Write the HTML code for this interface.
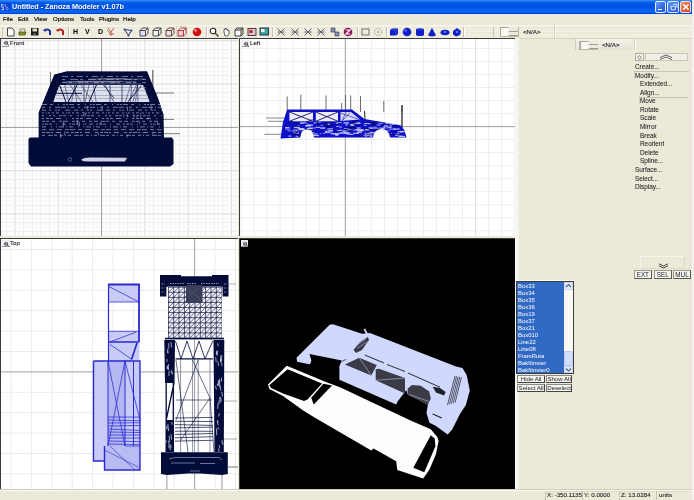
<!DOCTYPE html>
<html><head><meta charset="utf-8">
<style>
*{margin:0;padding:0;box-sizing:border-box}
body{width:694px;height:500px;overflow:hidden;background:#ece9d8;position:relative;font-family:"Liberation Sans",sans-serif;color:#000}
.a{position:absolute}
.t{position:absolute;white-space:nowrap;line-height:1;will-change:transform}
#menu .t{font-size:6.1px;top:16px;color:#111;-webkit-text-stroke:0.2px #111}
.panel .t{font-size:6.4px;color:#1a1a1a;-webkit-text-stroke:0.05px #1a1a1a}
.lst .t{font-size:5.9px;color:#fff;left:518px}
.sb .t{font-size:6.2px;color:#222;top:492.4px;-webkit-text-stroke:0.1px #222}
.bt{position:absolute;background:#f5f4ee;border:1px solid #6f6f66;font-size:6px;color:#222;text-align:center;line-height:7px;white-space:nowrap;will-change:transform}
</style></head><body>
<div class="a" style="left:692px;top:0;width:2px;height:500px;background:#f2f2ee"></div>
<div class="a" style="left:688.5px;top:38px;width:1px;height:451px;background:#e4e1d0"></div>
<!-- Title bar -->
<div class="a" style="left:0;top:0;width:692px;height:14px;background:linear-gradient(#3a94fa 0,#1a74f2 9%,#0058e6 22%,#0054e4 58%,#0864f4 76%,#0862f2 88%,#003ec4 100%)"></div>
<svg class="a" style="left:0;top:2px" width="11" height="10" viewBox="0 0 11 10">
  <rect x="0.5" y="1" width="10" height="8" fill="#0a3cc8" opacity="0.7"/>
  <path d="M3.6 2.6H1.6V5H3.4V7.6H1.4" stroke="#b8b8ff" stroke-width="1.1" fill="none"/>
  <path d="M5.2 2.4L5.8 4.6" stroke="#a8a8ff" stroke-width="1.2"/>
  <ellipse cx="7.2" cy="6.6" rx="1" ry="1.3" fill="none" stroke="#90a0ff" stroke-width="1"/>
</svg>
<div class="t" style="left:11.8px;top:3.2px;font-size:7.3px;font-weight:bold;color:#fff;letter-spacing:-0.05px;text-shadow:0.5px 0.5px 0.5px #0030a0">Untitled - Zanoza Modeler v1.07b</div>
<div class="a" style="left:654.5px;top:1.2px;width:11.5px;height:11.5px;border:1px solid #e8eefc;border-radius:2px;background:linear-gradient(135deg,#6a9cf8,#3268e4 60%,#2a58d0)"><div class="a" style="left:2.5px;top:6.5px;width:4px;height:1.6px;background:#fff"></div></div>
<div class="a" style="left:667px;top:1.2px;width:11.5px;height:11.5px;border:1px solid #e8eefc;border-radius:2px;background:linear-gradient(135deg,#6a9cf8,#3268e4 60%,#2a58d0)"><svg class="a" style="left:1.5px;top:1.2px" width="8" height="8"><path d="M3 1.2h4v3.6M1.2 3.2h4.2v3.6H1.2z" fill="none" stroke="#e8eefc" stroke-width="1"/></svg></div>
<div class="a" style="left:679.5px;top:1.2px;width:11.5px;height:11.5px;border:1px solid #f4e0d8;border-radius:2px;background:linear-gradient(135deg,#f59a70,#e0582c 60%,#c84420)">
  <svg class="a" style="left:1.2px;top:1.2px" width="8" height="8"><path d="M1.2 1.2L6.6 6.6M6.6 1.2L1.2 6.6" stroke="#fff" stroke-width="1.5"/></svg></div>
<!-- Menu -->
<div id="menu">
  <div class="t" style="left:3px">File</div>
  <div class="t" style="left:17.6px">Edit</div>
  <div class="t" style="left:34.3px">View</div>
  <div class="t" style="left:52.8px">Options</div>
  <div class="t" style="left:79.5px">Tools</div>
  <div class="t" style="left:99px">Plugins</div>
  <div class="t" style="left:123.4px">Help</div>
</div>
<!-- Toolbar -->
<div class="a" style="left:0;top:14px;width:692px;height:1px;background:#dfe6f6"></div>
<div class="a" style="left:0;top:25px;width:692px;height:13px;background:repeating-linear-gradient(#ece9d8 0,#ece9d8 1.4px,#f3f1e6 1.4px,#f3f1e6 2.4px)"></div>
<div class="a" style="left:0;top:25px;width:692px;height:0.8px;background:#f6f5ee"></div>
<div class="a" style="left:553.5px;top:25px;width:1px;height:13px;background:#d4d0bc"></div><div class="a" style="left:554.5px;top:25px;width:1px;height:13px;background:#faf9f4"></div>
<div class="a" style="left:2px;top:26.5px;width:1px;height:10px;background:#c8c5b2"></div>
<div class="a" style="left:67.5px;top:26.5px;width:1px;height:10px;background:#c5c2b0"></div><div class="a" style="left:68.5px;top:26.5px;width:1px;height:10px;background:#fff"></div>
<div class="a" style="left:206px;top:26.5px;width:1px;height:10px;background:#c5c2b0"></div><div class="a" style="left:207px;top:26.5px;width:1px;height:10px;background:#fff"></div>
<div class="a" style="left:272px;top:26.5px;width:1px;height:10px;background:#c5c2b0"></div><div class="a" style="left:273px;top:26.5px;width:1px;height:10px;background:#fff"></div>
<div class="a" style="left:357px;top:26.5px;width:1px;height:10px;background:#c5c2b0"></div><div class="a" style="left:358px;top:26.5px;width:1px;height:10px;background:#fff"></div>
<div class="a" style="left:385.5px;top:26.5px;width:1px;height:10px;background:#c5c2b0"></div><div class="a" style="left:386.5px;top:26.5px;width:1px;height:10px;background:#fff"></div>
<div class="a" style="left:462.5px;top:26.5px;width:1px;height:10px;background:#c5c2b0"></div><div class="a" style="left:463.5px;top:26.5px;width:1px;height:10px;background:#fff"></div>
<div class="a" style="left:492.5px;top:26.5px;width:1px;height:10px;background:#c5c2b0"></div>
<div class="a" style="left:499.5px;top:26.5px;width:19px;height:10px;background:#f4f3ec;border:1px solid #b8b6a8"></div>
<div class="a" style="left:500px;top:27px;width:7px;height:9px;border-left:1.2px solid #a8a698;border-top:1px solid #a8a698;background:#fafaf5"></div>
<div class="a" style="left:509px;top:27px;width:9px;height:4.5px;background:#eceade;border-bottom:1px solid #a09e90"></div>
<div class="a" style="left:509px;top:31.5px;width:9px;height:4.5px;background:#eceade;border-bottom:1px solid #a09e90"></div>
<div class="t" style="left:522.5px;top:29.2px;font-size:6.2px;color:#222;-webkit-text-stroke:0.12px #222">&lt;N/A&gt;</div>
<svg class="a" style="left:6px;top:26.8px" width="11" height="10" viewBox="0 0 11 10"><path d="M1.5 1h4.5l2 2v6h-6.5z" fill="#fff" stroke="#333" stroke-width="0.9"/></svg>
<svg class="a" style="left:18px;top:26.8px" width="11" height="10" viewBox="0 0 11 10"><path d="M1 5h7l-1 3H1z" fill="#8a9a20" stroke="#3a4010" stroke-width="0.7"/><path d="M2 2h5v3H2z" fill="#e8e0b0" stroke="#555" stroke-width="0.6"/></svg>
<svg class="a" style="left:30px;top:26.8px" width="11" height="10" viewBox="0 0 11 10"><rect x="1" y="1" width="7.5" height="7.5" fill="#1a1a1a"/><rect x="2.5" y="1.5" width="4.5" height="3" fill="#dfe0c8"/><rect x="3" y="6" width="3" height="2" fill="#555"/></svg>
<svg class="a" style="left:42px;top:26.8px" width="11" height="10" viewBox="0 0 11 10"><path d="M2 4a3.5 3 0 0 1 6 0v4" stroke="#2030a0" stroke-width="2" fill="none"/><path d="M1 3l2-1 1 3z" fill="#3040b0"/></svg>
<svg class="a" style="left:55px;top:26.8px" width="11" height="10" viewBox="0 0 11 10"><path d="M2 4a3.5 3 0 0 1 6 0v4" stroke="#b02020" stroke-width="2" fill="none"/><path d="M1 3l2-1 1 3z" fill="#c03030"/></svg>
<div class="t" style="left:73px;top:28.2px;font-size:7px;font-weight:bold;color:#000">H</div>
<div class="t" style="left:85px;top:28.2px;font-size:7px;font-weight:bold;color:#000">V</div>
<div class="t" style="left:97.5px;top:28.2px;font-size:7px;font-weight:bold;color:#000">D</div>
<svg class="a" style="left:106px;top:26.8px" width="11" height="10" viewBox="0 0 11 10"><path d="M2 1l3 4 3-4M5 5v4M3 7h5" stroke="#c04040" stroke-width="0.9" fill="none"/><path d="M1 3l3 3" stroke="#40a040" stroke-width="0.9"/></svg>
<svg class="a" style="left:123px;top:26.8px" width="11" height="10" viewBox="0 0 11 10"><path d="M1.5 2.5l7 1-3 5z" stroke="#223" stroke-width="0.9" fill="none"/><circle cx="1.5" cy="2.5" r="1" fill="#2040c0"/><circle cx="8.5" cy="3.5" r="1" fill="#2040c0"/><circle cx="5.5" cy="8.5" r="1" fill="#2040c0"/></svg>
<svg class="a" style="left:139px;top:26.8px" width="11" height="10" viewBox="0 0 11 10"><path d="M1 3.5h5.5v5.5H1z" fill="#dfe2f8" stroke="#334" stroke-width="0.9"/><path d="M1 3.5l2.5-2.5h5.5v5.5l-2.5 2.5M6.5 3.5l2.5-2.5" fill="none" stroke="#334" stroke-width="0.9"/></svg>
<svg class="a" style="left:152px;top:26.8px" width="11" height="10" viewBox="0 0 11 10"><path d="M1 3.5h5.5v5.5H1z" fill="#f4f4f4" stroke="#333" stroke-width="0.9"/><path d="M1 3.5l2.5-2.5h5.5v5.5l-2.5 2.5M6.5 3.5l2.5-2.5" fill="none" stroke="#333" stroke-width="0.9"/></svg>
<svg class="a" style="left:165px;top:26.8px" width="11" height="10" viewBox="0 0 11 10"><path d="M1 3.5h5.5v5.5H1z" fill="#f0dce4" stroke="#533" stroke-width="0.9"/><path d="M1 3.5l2.5-2.5h5.5v5.5l-2.5 2.5M6.5 3.5l2.5-2.5" fill="none" stroke="#533" stroke-width="0.9"/></svg>
<div class="a" style="left:176px;top:26px;width:11px;height:11px;background:#fbfbf8;border:1px solid #d8d6c8"></div>
<svg class="a" style="left:177px;top:26.8px" width="11" height="10" viewBox="0 0 11 10"><path d="M1 3.5h5.5v5.5H1z" fill="#f6d0d0" stroke="#a02020" stroke-width="0.9"/><path d="M1 3.5l2.5-2.5h5.5v5.5l-2.5 2.5M6.5 3.5l2.5-2.5" fill="none" stroke="#a02020" stroke-width="0.9"/></svg>
<svg class="a" style="left:191.5px;top:26.8px" width="11" height="10" viewBox="0 0 11 10"><circle cx="5" cy="5" r="4.3" fill="#d01010"/><circle cx="3.6" cy="3.4" r="1.3" fill="#ff9090"/></svg>
<svg class="a" style="left:209px;top:26.8px" width="11" height="10" viewBox="0 0 11 10"><circle cx="4" cy="4" r="2.8" fill="#fff" stroke="#222" stroke-width="1.1"/><path d="M6 6l3.5 3.5" stroke="#5a5030" stroke-width="1.6"/></svg>
<svg class="a" style="left:222px;top:26.8px" width="11" height="10" viewBox="0 0 11 10"><path d="M2 5v-2.5h1v-1h1.5v1h1v1h1.5v3.5l-1.5 2H3z" fill="#fff" stroke="#333" stroke-width="0.8"/></svg>
<svg class="a" style="left:234px;top:26.8px" width="11" height="10" viewBox="0 0 11 10"><path d="M1 3h6v6H1z" fill="#fff" stroke="#222" stroke-width="0.9"/><path d="M1 3l2-2h6v6l-2 2M7 3l2-2" fill="none" stroke="#222" stroke-width="0.9"/></svg>
<svg class="a" style="left:247px;top:26.8px" width="11" height="10" viewBox="0 0 11 10"><rect x="1" y="1.5" width="8" height="7" fill="#d8c8d0" stroke="#502030" stroke-width="0.9"/><rect x="2.5" y="3" width="3" height="3" fill="#c02020"/></svg>
<svg class="a" style="left:259px;top:26.8px" width="11" height="10" viewBox="0 0 11 10"><rect x="1" y="1" width="8.5" height="7" fill="#38a8a0" stroke="#223" stroke-width="0.9"/><rect x="2" y="2" width="3.5" height="3" fill="#f0f0f0"/></svg>
<svg class="a" style="left:276px;top:26.8px" width="11" height="10" viewBox="0 0 11 10"><path d="M1.5 1.5l7 7M8.5 1.5l-3 3M1.5 8.5l3-3M1.5 5h7" stroke="#403050" stroke-width="0.8" fill="none"/></svg>
<svg class="a" style="left:289.5px;top:26.8px" width="11" height="10" viewBox="0 0 11 10"><path d="M1.5 1.5l7 7M8.5 1.5l-3 3M1.5 8.5l3-3M1.5 5h7" stroke="#403050" stroke-width="0.8" fill="none"/></svg>
<svg class="a" style="left:303px;top:26.8px" width="11" height="10" viewBox="0 0 11 10"><path d="M1.5 1.5l7 7M8.5 1.5l-3 3M1.5 8.5l3-3M1.5 5h7" stroke="#403050" stroke-width="0.8" fill="none"/></svg>
<svg class="a" style="left:316px;top:26.8px" width="11" height="10" viewBox="0 0 11 10"><path d="M1.5 1.5l7 7M8.5 1.5l-3 3M1.5 8.5l3-3M1.5 5h7" stroke="#403050" stroke-width="0.8" fill="none"/></svg>
<svg class="a" style="left:330px;top:26.8px" width="11" height="10" viewBox="0 0 11 10"><path d="M1 1h4v4H1zM5 5h4v4H5z" fill="#8090c0" stroke="#333" stroke-width="0.6"/></svg>
<svg class="a" style="left:342.5px;top:26.8px" width="11" height="10" viewBox="0 0 11 10"><circle cx="5" cy="5" r="4.3" fill="#901860"/><path d="M3 3h4l-4 4h4" stroke="#fff" stroke-width="1.2" fill="none"/></svg>
<svg class="a" style="left:361px;top:26.8px" width="11" height="10" viewBox="0 0 11 10"><rect x="1" y="2" width="7" height="6" fill="none" stroke="#555" stroke-width="0.8"/></svg>
<svg class="a" style="left:373px;top:26.8px" width="11" height="10" viewBox="0 0 11 10"><circle cx="5" cy="5" r="3.5" fill="none" stroke="#8a8880" stroke-width="0.9" stroke-dasharray="1.2 1"/><circle cx="5" cy="5" r="0.8" fill="#777"/></svg>
<svg class="a" style="left:389px;top:26.8px" width="11" height="10" viewBox="0 0 11 10"><path d="M1 3l2-1.5h6v5.5l-2 1.5H1z" fill="#1020c8"/><path d="M1 3h6v5.5M7 3l2-1.5" stroke="#5060ff" stroke-width="0.5" fill="none"/></svg>
<svg class="a" style="left:402px;top:26.8px" width="11" height="10" viewBox="0 0 11 10"><circle cx="5" cy="5" r="4.3" fill="#1020c8"/><circle cx="3.5" cy="3.5" r="1.2" fill="#6070ff"/></svg>
<svg class="a" style="left:414.5px;top:26.8px" width="11" height="10" viewBox="0 0 11 10"><ellipse cx="5" cy="2.5" rx="4" ry="1.5" fill="#4050e0"/><path d="M1 2.5v5a4 1.5 0 0 0 8 0v-5" fill="#1020c8"/></svg>
<svg class="a" style="left:427px;top:26.8px" width="11" height="10" viewBox="0 0 11 10"><path d="M5 0.8l3.8 7.2a3.8 1.4 0 0 1-7.6 0z" fill="#1020c8"/></svg>
<svg class="a" style="left:439.5px;top:26.8px" width="11" height="10" viewBox="0 0 11 10"><ellipse cx="5" cy="5.5" rx="4.5" ry="2.8" fill="#1020c8"/><ellipse cx="5" cy="5" rx="1.8" ry="0.8" fill="#8890ff"/></svg>
<svg class="a" style="left:452px;top:26.8px" width="11" height="10" viewBox="0 0 11 10"><path d="M1 4l4-3 4 3-1 4-4 1.5-3-2z" fill="#1020c8"/><circle cx="5" cy="5" r="1" fill="#8890ff"/></svg>
<!-- Viewports -->
<div class="a" style="left:0;top:38px;width:237.5px;height:197.8px;background:#fff;border-top:1px solid #3c3c3c;border-left:1px solid #3c3c3c;overflow:hidden"><svg class="a" style="left:-1px;top:-39px" width="694" height="500" viewBox="0 0 694 500"><line x1="2.01" y1="38" x2="2.01" y2="237" stroke="#f5f5f5" stroke-width="1.0"/>
<line x1="6.34" y1="38" x2="6.34" y2="237" stroke="#ececec" stroke-width="1.0"/>
<line x1="10.67" y1="38" x2="10.67" y2="237" stroke="#f5f5f5" stroke-width="1.0"/>
<line x1="15.00" y1="38" x2="15.00" y2="237" stroke="#d8d8d8" stroke-width="1.0"/>
<line x1="19.33" y1="38" x2="19.33" y2="237" stroke="#f5f5f5" stroke-width="1.0"/>
<line x1="23.66" y1="38" x2="23.66" y2="237" stroke="#ececec" stroke-width="1.0"/>
<line x1="27.99" y1="38" x2="27.99" y2="237" stroke="#f5f5f5" stroke-width="1.0"/>
<line x1="32.32" y1="38" x2="32.32" y2="237" stroke="#ececec" stroke-width="1.0"/>
<line x1="36.65" y1="38" x2="36.65" y2="237" stroke="#f5f5f5" stroke-width="1.0"/>
<line x1="40.98" y1="38" x2="40.98" y2="237" stroke="#ececec" stroke-width="1.0"/>
<line x1="45.31" y1="38" x2="45.31" y2="237" stroke="#f5f5f5" stroke-width="1.0"/>
<line x1="49.64" y1="38" x2="49.64" y2="237" stroke="#ececec" stroke-width="1.0"/>
<line x1="53.97" y1="38" x2="53.97" y2="237" stroke="#f5f5f5" stroke-width="1.0"/>
<line x1="58.30" y1="38" x2="58.30" y2="237" stroke="#d8d8d8" stroke-width="1.0"/>
<line x1="62.63" y1="38" x2="62.63" y2="237" stroke="#f5f5f5" stroke-width="1.0"/>
<line x1="66.96" y1="38" x2="66.96" y2="237" stroke="#ececec" stroke-width="1.0"/>
<line x1="71.29" y1="38" x2="71.29" y2="237" stroke="#f5f5f5" stroke-width="1.0"/>
<line x1="75.62" y1="38" x2="75.62" y2="237" stroke="#ececec" stroke-width="1.0"/>
<line x1="79.95" y1="38" x2="79.95" y2="237" stroke="#f5f5f5" stroke-width="1.0"/>
<line x1="84.28" y1="38" x2="84.28" y2="237" stroke="#ececec" stroke-width="1.0"/>
<line x1="88.61" y1="38" x2="88.61" y2="237" stroke="#f5f5f5" stroke-width="1.0"/>
<line x1="92.94" y1="38" x2="92.94" y2="237" stroke="#ececec" stroke-width="1.0"/>
<line x1="97.27" y1="38" x2="97.27" y2="237" stroke="#f5f5f5" stroke-width="1.0"/>
<line x1="105.93" y1="38" x2="105.93" y2="237" stroke="#f5f5f5" stroke-width="1.0"/>
<line x1="110.26" y1="38" x2="110.26" y2="237" stroke="#ececec" stroke-width="1.0"/>
<line x1="114.59" y1="38" x2="114.59" y2="237" stroke="#f5f5f5" stroke-width="1.0"/>
<line x1="118.92" y1="38" x2="118.92" y2="237" stroke="#ececec" stroke-width="1.0"/>
<line x1="123.25" y1="38" x2="123.25" y2="237" stroke="#f5f5f5" stroke-width="1.0"/>
<line x1="127.58" y1="38" x2="127.58" y2="237" stroke="#ececec" stroke-width="1.0"/>
<line x1="131.91" y1="38" x2="131.91" y2="237" stroke="#f5f5f5" stroke-width="1.0"/>
<line x1="136.24" y1="38" x2="136.24" y2="237" stroke="#ececec" stroke-width="1.0"/>
<line x1="140.57" y1="38" x2="140.57" y2="237" stroke="#f5f5f5" stroke-width="1.0"/>
<line x1="144.90" y1="38" x2="144.90" y2="237" stroke="#d8d8d8" stroke-width="1.0"/>
<line x1="149.23" y1="38" x2="149.23" y2="237" stroke="#f5f5f5" stroke-width="1.0"/>
<line x1="153.56" y1="38" x2="153.56" y2="237" stroke="#ececec" stroke-width="1.0"/>
<line x1="157.89" y1="38" x2="157.89" y2="237" stroke="#f5f5f5" stroke-width="1.0"/>
<line x1="162.22" y1="38" x2="162.22" y2="237" stroke="#ececec" stroke-width="1.0"/>
<line x1="166.55" y1="38" x2="166.55" y2="237" stroke="#f5f5f5" stroke-width="1.0"/>
<line x1="170.88" y1="38" x2="170.88" y2="237" stroke="#ececec" stroke-width="1.0"/>
<line x1="175.21" y1="38" x2="175.21" y2="237" stroke="#f5f5f5" stroke-width="1.0"/>
<line x1="179.54" y1="38" x2="179.54" y2="237" stroke="#ececec" stroke-width="1.0"/>
<line x1="183.87" y1="38" x2="183.87" y2="237" stroke="#f5f5f5" stroke-width="1.0"/>
<line x1="188.20" y1="38" x2="188.20" y2="237" stroke="#d8d8d8" stroke-width="1.0"/>
<line x1="192.53" y1="38" x2="192.53" y2="237" stroke="#f5f5f5" stroke-width="1.0"/>
<line x1="196.86" y1="38" x2="196.86" y2="237" stroke="#ececec" stroke-width="1.0"/>
<line x1="201.19" y1="38" x2="201.19" y2="237" stroke="#f5f5f5" stroke-width="1.0"/>
<line x1="205.52" y1="38" x2="205.52" y2="237" stroke="#ececec" stroke-width="1.0"/>
<line x1="209.85" y1="38" x2="209.85" y2="237" stroke="#f5f5f5" stroke-width="1.0"/>
<line x1="214.18" y1="38" x2="214.18" y2="237" stroke="#ececec" stroke-width="1.0"/>
<line x1="218.51" y1="38" x2="218.51" y2="237" stroke="#f5f5f5" stroke-width="1.0"/>
<line x1="222.84" y1="38" x2="222.84" y2="237" stroke="#ececec" stroke-width="1.0"/>
<line x1="227.17" y1="38" x2="227.17" y2="237" stroke="#f5f5f5" stroke-width="1.0"/>
<line x1="231.50" y1="38" x2="231.50" y2="237" stroke="#d8d8d8" stroke-width="1.0"/>
<line x1="235.83" y1="38" x2="235.83" y2="237" stroke="#f5f5f5" stroke-width="1.0"/>
<line x1="0" y1="40.80" x2="238" y2="40.80" stroke="#d8d8d8" stroke-width="1.0"/>
<line x1="0" y1="45.13" x2="238" y2="45.13" stroke="#f5f5f5" stroke-width="1.0"/>
<line x1="0" y1="49.46" x2="238" y2="49.46" stroke="#ececec" stroke-width="1.0"/>
<line x1="0" y1="53.79" x2="238" y2="53.79" stroke="#f5f5f5" stroke-width="1.0"/>
<line x1="0" y1="58.12" x2="238" y2="58.12" stroke="#ececec" stroke-width="1.0"/>
<line x1="0" y1="62.45" x2="238" y2="62.45" stroke="#f5f5f5" stroke-width="1.0"/>
<line x1="0" y1="66.78" x2="238" y2="66.78" stroke="#ececec" stroke-width="1.0"/>
<line x1="0" y1="71.11" x2="238" y2="71.11" stroke="#f5f5f5" stroke-width="1.0"/>
<line x1="0" y1="75.44" x2="238" y2="75.44" stroke="#ececec" stroke-width="1.0"/>
<line x1="0" y1="79.77" x2="238" y2="79.77" stroke="#f5f5f5" stroke-width="1.0"/>
<line x1="0" y1="84.10" x2="238" y2="84.10" stroke="#d8d8d8" stroke-width="1.0"/>
<line x1="0" y1="88.43" x2="238" y2="88.43" stroke="#f5f5f5" stroke-width="1.0"/>
<line x1="0" y1="92.76" x2="238" y2="92.76" stroke="#ececec" stroke-width="1.0"/>
<line x1="0" y1="97.09" x2="238" y2="97.09" stroke="#f5f5f5" stroke-width="1.0"/>
<line x1="0" y1="101.42" x2="238" y2="101.42" stroke="#ececec" stroke-width="1.0"/>
<line x1="0" y1="105.75" x2="238" y2="105.75" stroke="#f5f5f5" stroke-width="1.0"/>
<line x1="0" y1="110.08" x2="238" y2="110.08" stroke="#ececec" stroke-width="1.0"/>
<line x1="0" y1="114.41" x2="238" y2="114.41" stroke="#f5f5f5" stroke-width="1.0"/>
<line x1="0" y1="118.74" x2="238" y2="118.74" stroke="#ececec" stroke-width="1.0"/>
<line x1="0" y1="123.07" x2="238" y2="123.07" stroke="#f5f5f5" stroke-width="1.0"/>
<line x1="0" y1="131.73" x2="238" y2="131.73" stroke="#f5f5f5" stroke-width="1.0"/>
<line x1="0" y1="136.06" x2="238" y2="136.06" stroke="#ececec" stroke-width="1.0"/>
<line x1="0" y1="140.39" x2="238" y2="140.39" stroke="#f5f5f5" stroke-width="1.0"/>
<line x1="0" y1="144.72" x2="238" y2="144.72" stroke="#ececec" stroke-width="1.0"/>
<line x1="0" y1="149.05" x2="238" y2="149.05" stroke="#f5f5f5" stroke-width="1.0"/>
<line x1="0" y1="153.38" x2="238" y2="153.38" stroke="#ececec" stroke-width="1.0"/>
<line x1="0" y1="157.71" x2="238" y2="157.71" stroke="#f5f5f5" stroke-width="1.0"/>
<line x1="0" y1="162.04" x2="238" y2="162.04" stroke="#ececec" stroke-width="1.0"/>
<line x1="0" y1="166.37" x2="238" y2="166.37" stroke="#f5f5f5" stroke-width="1.0"/>
<line x1="0" y1="170.70" x2="238" y2="170.70" stroke="#d8d8d8" stroke-width="1.0"/>
<line x1="0" y1="175.03" x2="238" y2="175.03" stroke="#f5f5f5" stroke-width="1.0"/>
<line x1="0" y1="179.36" x2="238" y2="179.36" stroke="#ececec" stroke-width="1.0"/>
<line x1="0" y1="183.69" x2="238" y2="183.69" stroke="#f5f5f5" stroke-width="1.0"/>
<line x1="0" y1="188.02" x2="238" y2="188.02" stroke="#ececec" stroke-width="1.0"/>
<line x1="0" y1="192.35" x2="238" y2="192.35" stroke="#f5f5f5" stroke-width="1.0"/>
<line x1="0" y1="196.68" x2="238" y2="196.68" stroke="#ececec" stroke-width="1.0"/>
<line x1="0" y1="201.01" x2="238" y2="201.01" stroke="#f5f5f5" stroke-width="1.0"/>
<line x1="0" y1="205.34" x2="238" y2="205.34" stroke="#ececec" stroke-width="1.0"/>
<line x1="0" y1="209.67" x2="238" y2="209.67" stroke="#f5f5f5" stroke-width="1.0"/>
<line x1="0" y1="214.00" x2="238" y2="214.00" stroke="#d8d8d8" stroke-width="1.0"/>
<line x1="0" y1="218.33" x2="238" y2="218.33" stroke="#f5f5f5" stroke-width="1.0"/>
<line x1="0" y1="222.66" x2="238" y2="222.66" stroke="#ececec" stroke-width="1.0"/>
<line x1="0" y1="226.99" x2="238" y2="226.99" stroke="#f5f5f5" stroke-width="1.0"/>
<line x1="0" y1="231.32" x2="238" y2="231.32" stroke="#ececec" stroke-width="1.0"/>
<line x1="0" y1="235.65" x2="238" y2="235.65" stroke="#f5f5f5" stroke-width="1.0"/>
<line x1="101.6" y1="38" x2="101.6" y2="237" stroke="#9c9c9c" stroke-width="1"/>
<line x1="0" y1="127.4" x2="238" y2="127.4" stroke="#9c9c9c" stroke-width="1"/>
<line x1="150" y1="93" x2="174" y2="93" stroke="#6a6a70" stroke-width="0.9"/>
<line x1="150" y1="119.4" x2="174" y2="119.4" stroke="#6a6a70" stroke-width="0.9"/>
<line x1="150" y1="133.7" x2="180" y2="133.7" stroke="#6a6a70" stroke-width="0.9"/>
<line x1="50.5" y1="72" x2="50.5" y2="112" stroke="#555" stroke-width="0.8"/>
<line x1="152.8" y1="70" x2="152.8" y2="104" stroke="#333" stroke-width="0.9"/>
<path d="M54.5 74.6 L67 71.3 L147 71.5 L158.3 99.2 L163.5 115 L164 138.5 L38.6 138.5 L38.6 113 Z" fill="#030b38"/>
<path d="M60 85 L143 85 L150 102 L52 102 Z" fill="#dcdfec"/>
<line x1="56" y1="87.5" x2="148" y2="87.5" stroke="#9ea3c0" stroke-width="0.8"/>
<line x1="56" y1="90.5" x2="148" y2="90.5" stroke="#9ea3c0" stroke-width="0.8"/>
<line x1="56" y1="95.5" x2="148" y2="95.5" stroke="#9ea3c0" stroke-width="0.8"/>
<line x1="56" y1="98.5" x2="148" y2="98.5" stroke="#9ea3c0" stroke-width="0.8"/>
<line x1="54" y1="93.3" x2="82" y2="93.3" stroke="#030b38" stroke-width="1"/>
<line x1="77.4" y1="84.7" x2="67.9" y2="102.5" stroke="#030b38" stroke-width="1.0"/>
<line x1="96.9" y1="84" x2="89" y2="102" stroke="#030b38" stroke-width="1.0"/>
<line x1="141.2" y1="86" x2="128" y2="101.5" stroke="#030b38" stroke-width="0.9"/>
<line x1="102.8" y1="84" x2="114" y2="98" stroke="#030b38" stroke-width="0.8"/>
<line x1="60" y1="86" x2="66" y2="102" stroke="#030b38" stroke-width="1.0"/>
<line x1="122" y1="84" x2="122" y2="102" stroke="#2a3060" stroke-width="0.8"/>
<line x1="84" y1="84" x2="84" y2="102" stroke="#2a3060" stroke-width="0.8"/>
<line x1="110" y1="84" x2="110" y2="102" stroke="#2a3060" stroke-width="0.8"/>
<path d="M54.5 74.6 L62 74 L50 113 L38.6 113 Z" fill="#030b38"/>
<path d="M140 71.5 L147 71.5 L158.3 99.2 L163.5 115 L154 115 Z" fill="#030b38"/>
<line x1="62" y1="76.5" x2="146" y2="76.5" stroke="#9aa0c4" stroke-width="0.7" stroke-dasharray="6 3 2 4"/>
<line x1="62" y1="79.5" x2="146" y2="79.5" stroke="#9aa0c4" stroke-width="0.7" stroke-dasharray="3 5 8 2"/>
<line x1="62" y1="82.5" x2="146" y2="82.5" stroke="#9aa0c4" stroke-width="0.7" stroke-dasharray="5 2 3 6"/>
<line x1="42" y1="104.5" x2="162" y2="104.5" stroke="#b4b8d4" stroke-width="0.75" stroke-dasharray="5 3 3 5 1 4 2 1 2 1" opacity="0.85"/>
<line x1="42" y1="107.3" x2="162" y2="107.3" stroke="#b4b8d4" stroke-width="0.75" stroke-dasharray="3 4 2 4 5 1 5 2 1 2" opacity="0.85"/>
<line x1="42" y1="110.1" x2="162" y2="110.1" stroke="#b4b8d4" stroke-width="0.75" stroke-dasharray="4 3 2 4 2 1 2 5 5 4" opacity="0.85"/>
<line x1="42" y1="112.9" x2="162" y2="112.9" stroke="#b4b8d4" stroke-width="0.75" stroke-dasharray="2 2 1 1 2 2 2 2 3 3" opacity="0.85"/>
<line x1="42" y1="115.7" x2="162" y2="115.7" stroke="#b4b8d4" stroke-width="0.75" stroke-dasharray="2 5 2 2 2 4 3 1 3 4" opacity="0.85"/>
<line x1="42" y1="118.5" x2="162" y2="118.5" stroke="#b4b8d4" stroke-width="0.75" stroke-dasharray="2 2 3 1 3 3 5 5 1 5" opacity="0.85"/>
<line x1="42" y1="121.3" x2="162" y2="121.3" stroke="#b4b8d4" stroke-width="0.75" stroke-dasharray="3 1 3 3 3 4 3 2 4 4" opacity="0.85"/>
<line x1="42" y1="124.1" x2="162" y2="124.1" stroke="#b4b8d4" stroke-width="0.75" stroke-dasharray="2 1 3 1 3 4 1 5 4 3" opacity="0.85"/>
<line x1="42" y1="126.9" x2="162" y2="126.9" stroke="#b4b8d4" stroke-width="0.75" stroke-dasharray="4 5 1 4 1 2 5 2 1 2" opacity="0.85"/>
<line x1="42" y1="129.7" x2="162" y2="129.7" stroke="#b4b8d4" stroke-width="0.75" stroke-dasharray="4 3 5 3 5 3 4 1 5 3" opacity="0.85"/>
<line x1="42" y1="132.5" x2="162" y2="132.5" stroke="#b4b8d4" stroke-width="0.75" stroke-dasharray="3 1 4 1 2 3 5 5 3 2" opacity="0.85"/>
<line x1="42" y1="135.3" x2="162" y2="135.3" stroke="#b4b8d4" stroke-width="0.75" stroke-dasharray="3 3 5 1 3 3 3 2 1 2" opacity="0.85"/>
<path d="M127.7 113.9 v3.9" stroke="#a8acc8" stroke-width="0.6"/>
<path d="M127.5 106.6 v4.4" stroke="#a8acc8" stroke-width="0.6"/>
<path d="M151.1 105.0 v5.0" stroke="#a8acc8" stroke-width="0.6"/>
<path d="M83.9 112.0 v4.6" stroke="#a8acc8" stroke-width="0.6"/>
<path d="M60.9 135.3 v4.6" stroke="#a8acc8" stroke-width="0.6"/>
<path d="M137.0 114.7 v2.8" stroke="#a8acc8" stroke-width="0.6"/>
<path d="M157.8 122.0 v2.5" stroke="#a8acc8" stroke-width="0.6"/>
<path d="M148.0 117.2 v2.7" stroke="#a8acc8" stroke-width="0.6"/>
<path d="M87.3 105.9 v3.7" stroke="#a8acc8" stroke-width="0.6"/>
<path d="M60.4 133.5 v4.5" stroke="#a8acc8" stroke-width="0.6"/>
<path d="M63.6 120.7 v5.8" stroke="#a8acc8" stroke-width="0.6"/>
<path d="M123.9 114.2 v3.1" stroke="#a8acc8" stroke-width="0.6"/>
<path d="M98.5 132.9 v2.5" stroke="#a8acc8" stroke-width="0.6"/>
<path d="M139.4 121.0 v2.7" stroke="#a8acc8" stroke-width="0.6"/>
<path d="M152.7 131.8 v2.7" stroke="#a8acc8" stroke-width="0.6"/>
<path d="M101.1 120.5 v4.2" stroke="#a8acc8" stroke-width="0.6"/>
<path d="M102.3 106.0 v5.2" stroke="#a8acc8" stroke-width="0.6"/>
<path d="M85.3 122.8 v2.1" stroke="#a8acc8" stroke-width="0.6"/>
<path d="M79.5 121.9 v4.7" stroke="#a8acc8" stroke-width="0.6"/>
<path d="M140.9 112.5 v5.9" stroke="#a8acc8" stroke-width="0.6"/>
<path d="M127.1 134.6 v3.4" stroke="#a8acc8" stroke-width="0.6"/>
<path d="M64.7 131.3 v3.9" stroke="#a8acc8" stroke-width="0.6"/>
<path d="M133.8 114.4 v3.1" stroke="#a8acc8" stroke-width="0.6"/>
<path d="M77.5 120.0 v4.7" stroke="#a8acc8" stroke-width="0.6"/>
<path d="M85.4 112.8 v3.4" stroke="#a8acc8" stroke-width="0.6"/>
<path d="M137.7 85 L135.5 102" stroke="#0a1040" stroke-width="0.5"/>
<path d="M136.4 85 L128.5 102" stroke="#0a1040" stroke-width="0.5"/>
<path d="M131.7 85 L130.5 102" stroke="#0a1040" stroke-width="0.5"/>
<path d="M89.0 85 L85.0 102" stroke="#0a1040" stroke-width="0.5"/>
<path d="M70.1 85 L81.6 102" stroke="#0a1040" stroke-width="0.5"/>
<path d="M74.9 85 L71.6 102" stroke="#0a1040" stroke-width="0.5"/>
<path d="M130.6 85 L125.4 102" stroke="#0a1040" stroke-width="0.5"/>
<path d="M64.7 85 L68.8 102" stroke="#0a1040" stroke-width="0.5"/>
<path d="M93.4 85 L96.2 102" stroke="#0a1040" stroke-width="0.5"/>
<path d="M137.6 85 L138.0 102" stroke="#0a1040" stroke-width="0.5"/>
<path d="M137.6 85 L132.9 102" stroke="#0a1040" stroke-width="0.5"/>
<path d="M105.0 85 L113.8 102" stroke="#0a1040" stroke-width="0.5"/>
<path d="M81.0 85 L92.9 102" stroke="#0a1040" stroke-width="0.5"/>
<path d="M74.6 85 L76.7 102" stroke="#0a1040" stroke-width="0.5"/>
<path d="M67.2 81.7 H136.6" stroke="#b0b4cc" stroke-width="0.5"/>
<path d="M88.7 79.1 H144.5" stroke="#b0b4cc" stroke-width="0.5"/>
<path d="M66.6 83.9 H141.2" stroke="#b0b4cc" stroke-width="0.5"/>
<path d="M98.7 78.7 H126.9" stroke="#b0b4cc" stroke-width="0.5"/>
<path d="M76.6 81.3 H122.3" stroke="#b0b4cc" stroke-width="0.5"/>
<path d="M62.9 82.0 H117.2" stroke="#b0b4cc" stroke-width="0.5"/>
<path d="M28.5 139 L30 137.5 L172 137.5 L173.5 140 L173.5 164 L170 166.5 L31 166.5 L28.5 163 Z" fill="#030b38"/>
<path d="M81 160 Q84 157.6 90 157.6 L127 157.8 L125 161.5 L88 161.6 Q83 161.5 81 160Z" fill="#cfd2e6"/>
<circle cx="70" cy="159.5" r="1.8" fill="none" stroke="#8088b0" stroke-width="0.6"/></svg></div>
<div class="a" style="left:239px;top:38px;width:276px;height:197.8px;background:#fff;border-top:1px solid #3c3c3c;border-left:1px solid #3c3c3c;overflow:hidden"><svg class="a" style="left:-240px;top:-39px" width="694" height="500" viewBox="0 0 694 500"><line x1="241.06" y1="38" x2="241.06" y2="237" stroke="#eeeeee" stroke-width="1.0"/>
<line x1="254.09" y1="38" x2="254.09" y2="237" stroke="#eeeeee" stroke-width="1.0"/>
<line x1="267.12" y1="38" x2="267.12" y2="237" stroke="#eeeeee" stroke-width="1.0"/>
<line x1="280.15" y1="38" x2="280.15" y2="237" stroke="#eeeeee" stroke-width="1.0"/>
<line x1="293.18" y1="38" x2="293.18" y2="237" stroke="#eeeeee" stroke-width="1.0"/>
<line x1="306.21" y1="38" x2="306.21" y2="237" stroke="#eeeeee" stroke-width="1.0"/>
<line x1="319.24" y1="38" x2="319.24" y2="237" stroke="#eeeeee" stroke-width="1.0"/>
<line x1="332.27" y1="38" x2="332.27" y2="237" stroke="#eeeeee" stroke-width="1.0"/>
<line x1="358.33" y1="38" x2="358.33" y2="237" stroke="#eeeeee" stroke-width="1.0"/>
<line x1="371.36" y1="38" x2="371.36" y2="237" stroke="#eeeeee" stroke-width="1.0"/>
<line x1="384.39" y1="38" x2="384.39" y2="237" stroke="#eeeeee" stroke-width="1.0"/>
<line x1="397.42" y1="38" x2="397.42" y2="237" stroke="#eeeeee" stroke-width="1.0"/>
<line x1="410.45" y1="38" x2="410.45" y2="237" stroke="#eeeeee" stroke-width="1.0"/>
<line x1="423.48" y1="38" x2="423.48" y2="237" stroke="#eeeeee" stroke-width="1.0"/>
<line x1="436.51" y1="38" x2="436.51" y2="237" stroke="#eeeeee" stroke-width="1.0"/>
<line x1="449.54" y1="38" x2="449.54" y2="237" stroke="#eeeeee" stroke-width="1.0"/>
<line x1="462.57" y1="38" x2="462.57" y2="237" stroke="#eeeeee" stroke-width="1.0"/>
<line x1="475.60" y1="38" x2="475.60" y2="237" stroke="#dcdcdc" stroke-width="1.0"/>
<line x1="488.63" y1="38" x2="488.63" y2="237" stroke="#eeeeee" stroke-width="1.0"/>
<line x1="501.66" y1="38" x2="501.66" y2="237" stroke="#eeeeee" stroke-width="1.0"/>
<line x1="514.69" y1="38" x2="514.69" y2="237" stroke="#eeeeee" stroke-width="1.0"/>
<line x1="239" y1="48.42" x2="516" y2="48.42" stroke="#eeeeee" stroke-width="1.0"/>
<line x1="239" y1="61.45" x2="516" y2="61.45" stroke="#eeeeee" stroke-width="1.0"/>
<line x1="239" y1="74.48" x2="516" y2="74.48" stroke="#eeeeee" stroke-width="1.0"/>
<line x1="239" y1="87.51" x2="516" y2="87.51" stroke="#eeeeee" stroke-width="1.0"/>
<line x1="239" y1="100.54" x2="516" y2="100.54" stroke="#eeeeee" stroke-width="1.0"/>
<line x1="239" y1="113.57" x2="516" y2="113.57" stroke="#eeeeee" stroke-width="1.0"/>
<line x1="239" y1="139.63" x2="516" y2="139.63" stroke="#eeeeee" stroke-width="1.0"/>
<line x1="239" y1="152.66" x2="516" y2="152.66" stroke="#eeeeee" stroke-width="1.0"/>
<line x1="239" y1="165.69" x2="516" y2="165.69" stroke="#eeeeee" stroke-width="1.0"/>
<line x1="239" y1="178.72" x2="516" y2="178.72" stroke="#eeeeee" stroke-width="1.0"/>
<line x1="239" y1="191.75" x2="516" y2="191.75" stroke="#eeeeee" stroke-width="1.0"/>
<line x1="239" y1="204.78" x2="516" y2="204.78" stroke="#eeeeee" stroke-width="1.0"/>
<line x1="239" y1="217.81" x2="516" y2="217.81" stroke="#eeeeee" stroke-width="1.0"/>
<line x1="239" y1="230.84" x2="516" y2="230.84" stroke="#eeeeee" stroke-width="1.0"/>
<line x1="345.3" y1="38" x2="345.3" y2="237" stroke="#a0a0a0" stroke-width="1"/>
<line x1="239" y1="126.6" x2="516" y2="126.6" stroke="#a0a0a0" stroke-width="1"/>
<line x1="287.2" y1="96.5" x2="287.2" y2="112" stroke="#5a5a62" stroke-width="0.9"/>
<line x1="300.8" y1="94.7" x2="300.8" y2="112" stroke="#5a5a62" stroke-width="0.9"/>
<line x1="326" y1="95.4" x2="326" y2="112" stroke="#5a5a62" stroke-width="0.9"/>
<line x1="345.6" y1="94.7" x2="345.6" y2="112" stroke="#5a5a62" stroke-width="0.9"/>
<line x1="350.7" y1="95.5" x2="350.7" y2="112" stroke="#5a5a62" stroke-width="0.9"/>
<line x1="360.5" y1="96" x2="360.5" y2="112" stroke="#5a5a62" stroke-width="0.9"/>
<line x1="383.8" y1="101" x2="383.8" y2="112" stroke="#5a5a62" stroke-width="0.9"/>
<line x1="402" y1="105.7" x2="402" y2="112" stroke="#5a5a62" stroke-width="0.9"/>
<line x1="341.7" y1="103" x2="341.7" y2="112" stroke="#5a5a62" stroke-width="0.9"/>
<line x1="266" y1="118" x2="284" y2="118" stroke="#6a6a70" stroke-width="0.8"/>
<line x1="268" y1="121.3" x2="284" y2="121.3" stroke="#6a6a70" stroke-width="0.8"/>
<line x1="264.5" y1="134.3" x2="284" y2="134.3" stroke="#6a6a70" stroke-width="0.8"/>
<line x1="402" y1="105" x2="402" y2="128" stroke="#333" stroke-width="1.4"/>
<clipPath id="lb"><path d="M287.2 109.5 L352 109.5 L364.5 119 L400.5 125.2 L404.5 130.2 L406.5 137.5 L390 137.5 Q389 129 381.5 129 Q374 129 373 137.5 L314 137.5 Q313 129.3 307 129.3 Q301 129.3 300.3 137.5 L280.5 138.5 L283 122 Z"/></clipPath>
<path d="M287.2 109.5 L352 109.5 L364.5 119 L400.5 125.2 L404.5 130.2 L406.5 137.5 L390 137.5 Q389 129 381.5 129 Q374 129 373 137.5 L314 137.5 Q313 129.3 307 129.3 Q301 129.3 300.3 137.5 L280.5 138.5 L283 122 Z" fill="#0d10c8"/>
<rect x="289.4" y="112" width="23.600000000000023" height="9.3" fill="#eceefc"/>
<path d="M289.4 112 L313 121.3 M313 112 L289.4 121.3" stroke="#10105a" stroke-width="0.9"/>
<rect x="315.8" y="112" width="22.19999999999999" height="9.3" fill="#eceefc"/>
<path d="M315.8 112 L338 121.3 M338 112 L315.8 121.3" stroke="#10105a" stroke-width="0.9"/>
<path d="M340.5 112 L351 112 L360 119.5 L340.5 121Z" fill="#d8dafa"/>
<path d="M340.5 113 L358 119 M346 112 L342 121 M350 112.5 L343 120" stroke="#10108a" stroke-width="0.6"/>
<g clip-path="url(#lb)">
<rect x="336.5" y="129.8" width="5.7" height="1.1" fill="#c8caf8" opacity="0.9"/>
<rect x="342.9" y="130.2" width="2.3" height="1.1" fill="#c8caf8" opacity="0.9"/>
<rect x="357.1" y="133.1" width="1.9" height="0.9" fill="#c8caf8" opacity="0.9"/>
<rect x="294.5" y="133.3" width="4.6" height="0.6" fill="#c8caf8" opacity="0.9"/>
<rect x="397.9" y="135.5" width="4.4" height="1.2" fill="#c8caf8" opacity="0.9"/>
<rect x="302.3" y="122.2" width="3.9" height="0.7" fill="#c8caf8" opacity="0.9"/>
<rect x="306.1" y="125.4" width="1.6" height="1.1" fill="#c8caf8" opacity="0.9"/>
<rect x="335.1" y="133.8" width="3.8" height="1.2" fill="#c8caf8" opacity="0.9"/>
<rect x="342.0" y="131.3" width="3.6" height="0.9" fill="#c8caf8" opacity="0.9"/>
<rect x="399.7" y="135.9" width="5.3" height="1.3" fill="#c8caf8" opacity="0.9"/>
<rect x="320.6" y="125.2" width="2.8" height="0.7" fill="#c8caf8" opacity="0.9"/>
<rect x="372.9" y="127.6" width="5.3" height="1.0" fill="#c8caf8" opacity="0.9"/>
<rect x="395.1" y="133.9" width="1.5" height="0.8" fill="#c8caf8" opacity="0.9"/>
<rect x="389.6" y="128.6" width="5.9" height="1.0" fill="#c8caf8" opacity="0.9"/>
<rect x="292.5" y="130.8" width="5.0" height="0.9" fill="#c8caf8" opacity="0.9"/>
<rect x="294.1" y="126.7" width="5.8" height="1.4" fill="#c8caf8" opacity="0.9"/>
<rect x="297.7" y="125.4" width="2.0" height="0.7" fill="#c8caf8" opacity="0.9"/>
<rect x="376.5" y="124.5" width="4.0" height="1.0" fill="#c8caf8" opacity="0.9"/>
<rect x="306.1" y="132.2" width="2.1" height="1.2" fill="#c8caf8" opacity="0.9"/>
<rect x="297.5" y="127.9" width="2.5" height="0.9" fill="#c8caf8" opacity="0.9"/>
<rect x="396.6" y="133.2" width="2.9" height="1.5" fill="#c8caf8" opacity="0.9"/>
<rect x="308.4" y="127.5" width="5.3" height="1.2" fill="#c8caf8" opacity="0.9"/>
<rect x="295.6" y="135.9" width="2.5" height="0.9" fill="#c8caf8" opacity="0.9"/>
<rect x="373.6" y="126.6" width="2.8" height="0.7" fill="#c8caf8" opacity="0.9"/>
<rect x="294.5" y="130.2" width="2.6" height="1.2" fill="#c8caf8" opacity="0.9"/>
<rect x="327.1" y="128.3" width="5.8" height="1.1" fill="#c8caf8" opacity="0.9"/>
<rect x="350.7" y="134.1" width="2.3" height="0.8" fill="#c8caf8" opacity="0.9"/>
<rect x="389.4" y="133.4" width="2.6" height="0.8" fill="#c8caf8" opacity="0.9"/>
<rect x="369.8" y="135.2" width="2.4" height="1.6" fill="#c8caf8" opacity="0.9"/>
<rect x="386.3" y="130.4" width="3.4" height="0.7" fill="#c8caf8" opacity="0.9"/>
<rect x="288.5" y="135.5" width="2.6" height="1.3" fill="#c8caf8" opacity="0.9"/>
<rect x="313.8" y="133.5" width="4.2" height="0.9" fill="#c8caf8" opacity="0.9"/>
<rect x="304.4" y="132.1" width="1.8" height="0.8" fill="#c8caf8" opacity="0.9"/>
<rect x="348.9" y="133.9" width="4.3" height="0.9" fill="#c8caf8" opacity="0.9"/>
<rect x="390.4" y="124.9" width="1.6" height="0.9" fill="#c8caf8" opacity="0.9"/>
<rect x="335.7" y="122.8" width="2.3" height="1.0" fill="#c8caf8" opacity="0.9"/>
<rect x="350.4" y="123.8" width="3.1" height="1.5" fill="#c8caf8" opacity="0.9"/>
<rect x="397.7" y="131.2" width="4.6" height="1.2" fill="#c8caf8" opacity="0.9"/>
<rect x="300.3" y="122.5" width="1.6" height="1.5" fill="#c8caf8" opacity="0.9"/>
<rect x="365.3" y="135.5" width="1.6" height="1.2" fill="#c8caf8" opacity="0.9"/>
<rect x="339.9" y="132.2" width="2.9" height="1.6" fill="#c8caf8" opacity="0.9"/>
<rect x="292.7" y="129.6" width="4.8" height="1.5" fill="#c8caf8" opacity="0.9"/>
<rect x="369.5" y="131.9" width="5.1" height="1.5" fill="#c8caf8" opacity="0.9"/>
<rect x="324.8" y="131.6" width="5.6" height="1.5" fill="#c8caf8" opacity="0.9"/>
<rect x="332.4" y="133.1" width="5.4" height="1.2" fill="#c8caf8" opacity="0.9"/>
<rect x="356.5" y="127.4" width="4.1" height="1.2" fill="#c8caf8" opacity="0.9"/>
<rect x="293.3" y="131.0" width="6.0" height="1.5" fill="#c8caf8" opacity="0.9"/>
<rect x="368.5" y="127.4" width="4.8" height="1.2" fill="#c8caf8" opacity="0.9"/>
<rect x="335.1" y="133.7" width="1.9" height="1.4" fill="#c8caf8" opacity="0.9"/>
<rect x="287.5" y="130.4" width="3.7" height="0.8" fill="#c8caf8" opacity="0.9"/>
<rect x="365.0" y="129.0" width="4.3" height="1.5" fill="#c8caf8" opacity="0.9"/>
<rect x="313.7" y="122.2" width="2.9" height="1.3" fill="#c8caf8" opacity="0.9"/>
<rect x="307.5" y="124.4" width="5.6" height="1.3" fill="#c8caf8" opacity="0.9"/>
<rect x="335.3" y="134.5" width="3.0" height="1.3" fill="#c8caf8" opacity="0.9"/>
<rect x="307.0" y="128.0" width="5.1" height="1.5" fill="#c8caf8" opacity="0.9"/>
<rect x="386.1" y="127.4" width="4.1" height="0.9" fill="#c8caf8" opacity="0.9"/>
<rect x="299.8" y="129.0" width="5.3" height="1.4" fill="#c8caf8" opacity="0.9"/>
<rect x="366.5" y="135.3" width="2.7" height="0.8" fill="#c8caf8" opacity="0.9"/>
<rect x="336.3" y="125.9" width="2.5" height="1.0" fill="#c8caf8" opacity="0.9"/>
<rect x="356.6" y="128.9" width="2.9" height="1.4" fill="#c8caf8" opacity="0.9"/>
<rect x="397.9" y="128.3" width="1.8" height="0.6" fill="#c8caf8" opacity="0.9"/>
<rect x="385.2" y="122.6" width="4.7" height="1.2" fill="#c8caf8" opacity="0.9"/>
<rect x="319.8" y="133.1" width="1.6" height="0.7" fill="#c8caf8" opacity="0.9"/>
<rect x="336.8" y="122.3" width="5.2" height="0.8" fill="#c8caf8" opacity="0.9"/>
<rect x="300.3" y="122.7" width="4.3" height="1.0" fill="#c8caf8" opacity="0.9"/>
<rect x="357.1" y="131.2" width="5.1" height="1.6" fill="#c8caf8" opacity="0.9"/>
<rect x="363.4" y="124.8" width="3.6" height="0.8" fill="#c8caf8" opacity="0.9"/>
<rect x="285.2" y="128.6" width="4.7" height="0.8" fill="#c8caf8" opacity="0.9"/>
<rect x="315.6" y="126.8" width="4.6" height="1.1" fill="#c8caf8" opacity="0.9"/>
<rect x="355.3" y="132.6" width="3.3" height="1.4" fill="#c8caf8" opacity="0.9"/>
<rect x="389.1" y="123.2" width="5.7" height="1.3" fill="#c8caf8" opacity="0.9"/>
<rect x="299.1" y="128.3" width="4.3" height="1.5" fill="#c8caf8" opacity="0.9"/>
<rect x="327.7" y="130.0" width="5.5" height="1.4" fill="#c8caf8" opacity="0.9"/>
<rect x="393.5" y="128.5" width="4.4" height="0.8" fill="#c8caf8" opacity="0.9"/>
<rect x="367.7" y="133.5" width="4.4" height="1.3" fill="#c8caf8" opacity="0.9"/>
<rect x="308.7" y="134.6" width="5.9" height="1.6" fill="#c8caf8" opacity="0.9"/>
<rect x="346.3" y="133.1" width="2.9" height="1.5" fill="#c8caf8" opacity="0.9"/>
<rect x="383.3" y="126.9" width="1.9" height="1.0" fill="#c8caf8" opacity="0.9"/>
<rect x="347.8" y="132.8" width="3.7" height="0.6" fill="#c8caf8" opacity="0.9"/>
<rect x="377.9" y="122.9" width="5.1" height="0.8" fill="#c8caf8" opacity="0.9"/>
<rect x="322.9" y="133.0" width="2.1" height="0.7" fill="#c8caf8" opacity="0.9"/>
<rect x="343.9" y="132.1" width="5.3" height="1.3" fill="#c8caf8" opacity="0.9"/>
<rect x="393.7" y="128.9" width="5.8" height="0.7" fill="#c8caf8" opacity="0.9"/>
<rect x="309.7" y="129.4" width="2.8" height="1.3" fill="#c8caf8" opacity="0.9"/>
<rect x="358.1" y="129.3" width="5.3" height="1.2" fill="#c8caf8" opacity="0.9"/>
<rect x="320.2" y="127.3" width="5.3" height="1.5" fill="#c8caf8" opacity="0.9"/>
<rect x="308.2" y="133.9" width="5.9" height="1.1" fill="#c8caf8" opacity="0.9"/>
<rect x="350.5" y="124.8" width="3.9" height="1.1" fill="#c8caf8" opacity="0.9"/>
<rect x="354.2" y="122.4" width="5.9" height="1.1" fill="#c8caf8" opacity="0.9"/>
<rect x="330.5" y="133.2" width="4.0" height="1.1" fill="#c8caf8" opacity="0.9"/>
<rect x="364.2" y="122.9" width="3.9" height="1.0" fill="#c8caf8" opacity="0.9"/>
<rect x="395.0" y="134.9" width="2.7" height="1.1" fill="#c8caf8" opacity="0.9"/>
<rect x="298.7" y="128.1" width="5.2" height="1.5" fill="#c8caf8" opacity="0.9"/>
<rect x="339.3" y="126.4" width="2.4" height="1.2" fill="#c8caf8" opacity="0.9"/>
<rect x="391.3" y="123.8" width="5.0" height="0.6" fill="#c8caf8" opacity="0.9"/>
<rect x="306.5" y="125.2" width="4.6" height="0.9" fill="#c8caf8" opacity="0.9"/>
<rect x="325.2" y="130.7" width="2.0" height="1.3" fill="#c8caf8" opacity="0.9"/>
<rect x="298.2" y="129.1" width="2.6" height="0.8" fill="#c8caf8" opacity="0.9"/>
<rect x="345.5" y="128.1" width="3.2" height="1.0" fill="#c8caf8" opacity="0.9"/>
<rect x="345.4" y="124.2" width="2.4" height="1.2" fill="#c8caf8" opacity="0.9"/>
<rect x="358.1" y="129.4" width="5.3" height="1.2" fill="#c8caf8" opacity="0.9"/>
<rect x="383.4" y="125.3" width="4.8" height="1.4" fill="#c8caf8" opacity="0.9"/>
<rect x="388.7" y="126.4" width="2.9" height="1.5" fill="#c8caf8" opacity="0.9"/>
<rect x="309.3" y="136.0" width="5.5" height="0.7" fill="#c8caf8" opacity="0.9"/>
<rect x="311.8" y="132.2" width="2.7" height="0.7" fill="#c8caf8" opacity="0.9"/>
<rect x="380.5" y="127.9" width="5.1" height="0.7" fill="#c8caf8" opacity="0.9"/>
<rect x="330.7" y="131.6" width="1.6" height="0.8" fill="#c8caf8" opacity="0.9"/>
<rect x="363.2" y="134.8" width="5.9" height="0.7" fill="#c8caf8" opacity="0.9"/>
<rect x="342.7" y="132.6" width="3.8" height="1.3" fill="#c8caf8" opacity="0.9"/>
<rect x="305.9" y="123.0" width="2.0" height="0.6" fill="#c8caf8" opacity="0.9"/>
<rect x="348.0" y="129.2" width="4.1" height="0.7" fill="#c8caf8" opacity="0.9"/>
<rect x="305.4" y="124.9" width="5.3" height="1.6" fill="#c8caf8" opacity="0.9"/>
<rect x="391.5" y="123.3" width="1.8" height="1.6" fill="#c8caf8" opacity="0.9"/>
<rect x="337.6" y="132.7" width="3.0" height="1.1" fill="#c8caf8" opacity="0.9"/>
<rect x="343.8" y="128.0" width="4.2" height="0.6" fill="#c8caf8" opacity="0.9"/>
<rect x="365.3" y="133.8" width="2.3" height="1.1" fill="#c8caf8" opacity="0.9"/>
<rect x="369.8" y="127.7" width="2.4" height="0.8" fill="#c8caf8" opacity="0.9"/>
<rect x="343.5" y="122.2" width="5.5" height="1.4" fill="#c8caf8" opacity="0.9"/>
<rect x="365.7" y="134.1" width="4.3" height="1.0" fill="#c8caf8" opacity="0.9"/>
<rect x="353.6" y="129.1" width="5.9" height="1.4" fill="#c8caf8" opacity="0.9"/>
<rect x="314.0" y="134.8" width="4.8" height="1.4" fill="#c8caf8" opacity="0.9"/>
<rect x="378.5" y="127.7" width="5.5" height="1.5" fill="#c8caf8" opacity="0.9"/>
<rect x="364.6" y="132.7" width="4.9" height="1.0" fill="#c8caf8" opacity="0.9"/>
<rect x="367.8" y="123.0" width="3.0" height="1.1" fill="#c8caf8" opacity="0.9"/>
<rect x="285.2" y="127.0" width="4.4" height="1.2" fill="#c8caf8" opacity="0.9"/>
<rect x="310.9" y="135.2" width="4.5" height="0.9" fill="#c8caf8" opacity="0.9"/>
<rect x="360.5" y="130.0" width="3.9" height="1.0" fill="#c8caf8" opacity="0.9"/>
<rect x="400.0" y="131.0" width="4.7" height="1.4" fill="#c8caf8" opacity="0.9"/>
<rect x="397.7" y="122.3" width="4.3" height="1.3" fill="#c8caf8" opacity="0.9"/>
<rect x="313.8" y="127.6" width="1.7" height="0.8" fill="#c8caf8" opacity="0.9"/>
<rect x="327.6" y="123.4" width="2.6" height="1.5" fill="#c8caf8" opacity="0.9"/>
<rect x="347.8" y="129.1" width="5.9" height="1.2" fill="#c8caf8" opacity="0.9"/>
<rect x="399.4" y="130.9" width="5.1" height="0.7" fill="#c8caf8" opacity="0.9"/>
<rect x="353.3" y="132.6" width="1.7" height="1.5" fill="#c8caf8" opacity="0.9"/>
<rect x="302.6" y="128.6" width="2.3" height="1.1" fill="#c8caf8" opacity="0.9"/>
<rect x="354.9" y="122.8" width="5.8" height="1.0" fill="#c8caf8" opacity="0.9"/>
<rect x="345.1" y="130.4" width="3.1" height="0.9" fill="#c8caf8" opacity="0.9"/>
<rect x="360.0" y="129.8" width="2.8" height="1.3" fill="#c8caf8" opacity="0.9"/>
<rect x="318.3" y="122.2" width="2.6" height="0.6" fill="#c8caf8" opacity="0.9"/>
<rect x="302.2" y="132.6" width="3.3" height="1.5" fill="#c8caf8" opacity="0.9"/>
<path d="M366.3 121.8 l8.9 2.7" stroke="#06084a" stroke-width="0.7"/>
<path d="M292.1 134.6 l5.6 -0.1" stroke="#06084a" stroke-width="0.7"/>
<path d="M391.0 124.7 l6.1 2.6" stroke="#06084a" stroke-width="0.7"/>
<path d="M363.5 128.0 l8.9 1.9" stroke="#06084a" stroke-width="0.7"/>
<path d="M350.4 122.7 l6.7 -0.3" stroke="#06084a" stroke-width="0.7"/>
<path d="M306.4 121.8 l6.2 -2.3" stroke="#06084a" stroke-width="0.7"/>
<path d="M332.7 131.0 l5.7 -1.4" stroke="#06084a" stroke-width="0.7"/>
<path d="M348.0 127.3 l7.7 0.2" stroke="#06084a" stroke-width="0.7"/>
<path d="M393.7 135.3 l7.4 -1.6" stroke="#06084a" stroke-width="0.7"/>
<path d="M296.5 134.4 l7.7 0.7" stroke="#06084a" stroke-width="0.7"/>
<path d="M323.5 125.1 l7.1 0.4" stroke="#06084a" stroke-width="0.7"/>
<path d="M349.1 130.5 l7.5 -1.9" stroke="#06084a" stroke-width="0.7"/>
<path d="M311.4 135.7 l8.5 2.3" stroke="#06084a" stroke-width="0.7"/>
<path d="M288.3 121.9 l4.6 -0.4" stroke="#06084a" stroke-width="0.7"/>
<path d="M352.6 122.5 l6.2 -2.6" stroke="#06084a" stroke-width="0.7"/>
<path d="M293.5 131.1 l6.3 0.8" stroke="#06084a" stroke-width="0.7"/>
<path d="M325.1 128.2 l4.3 -0.9" stroke="#06084a" stroke-width="0.7"/>
<path d="M365.9 133.6 l3.4 -2.3" stroke="#06084a" stroke-width="0.7"/>
<path d="M373.0 130.4 l7.6 -1.7" stroke="#06084a" stroke-width="0.7"/>
<path d="M330.7 124.9 l7.9 -0.8" stroke="#06084a" stroke-width="0.7"/>
<path d="M355.9 135.8 l5.0 0.3" stroke="#06084a" stroke-width="0.7"/>
<path d="M366.1 134.8 l5.6 -0.8" stroke="#06084a" stroke-width="0.7"/>
<path d="M294.7 134.1 l3.5 -2.5" stroke="#06084a" stroke-width="0.7"/>
<path d="M346.1 128.3 l7.1 -1.2" stroke="#06084a" stroke-width="0.7"/>
<path d="M369.3 122.1 l4.3 1.0" stroke="#06084a" stroke-width="0.7"/>
<path d="M293.0 125.6 l7.3 1.2" stroke="#06084a" stroke-width="0.7"/>
<path d="M315.1 123.1 l5.1 1.4" stroke="#06084a" stroke-width="0.7"/>
<path d="M324.3 122.8 l7.3 0.4" stroke="#06084a" stroke-width="0.7"/>
<path d="M385.0 135.1 l8.5 -0.4" stroke="#06084a" stroke-width="0.7"/>
<path d="M372.3 125.6 l4.9 -0.6" stroke="#06084a" stroke-width="0.7"/>
<path d="M386.8 134.4 l4.5 -0.8" stroke="#06084a" stroke-width="0.7"/>
<path d="M324.2 126.4 l5.4 -0.7" stroke="#06084a" stroke-width="0.7"/>
<path d="M305.4 129.5 l7.8 0.2" stroke="#06084a" stroke-width="0.7"/>
<path d="M376.0 129.4 l4.1 1.6" stroke="#06084a" stroke-width="0.7"/>
<path d="M380.9 125.2 l3.1 0.1" stroke="#06084a" stroke-width="0.7"/>
<path d="M343.9 129.5 l8.8 0.9" stroke="#06084a" stroke-width="0.7"/>
<path d="M372.5 122.0 l6.3 1.7" stroke="#06084a" stroke-width="0.7"/>
<path d="M293.2 122.2 l7.4 2.4" stroke="#06084a" stroke-width="0.7"/>
<path d="M293.3 130.5 l3.9 1.5" stroke="#06084a" stroke-width="0.7"/>
<path d="M355.4 124.7 l4.3 1.6" stroke="#06084a" stroke-width="0.7"/>
</g>
<path d="M365 119 L364.5 111" stroke="#222" stroke-width="1"/></svg></div>
<div class="a" style="left:0;top:238.2px;width:238px;height:250.5px;background:#fff;border-top:1px solid #3c3c3c;border-left:1px solid #3c3c3c;overflow:hidden"><svg class="a" style="left:-1px;top:-239.2px" width="694" height="500" viewBox="0 0 694 500"><line x1="11.00" y1="238" x2="11.00" y2="490" stroke="#ebebeb" stroke-width="1.0"/>
<line x1="31.40" y1="238" x2="31.40" y2="490" stroke="#ebebeb" stroke-width="1.0"/>
<line x1="51.80" y1="238" x2="51.80" y2="490" stroke="#ebebeb" stroke-width="1.0"/>
<line x1="72.20" y1="238" x2="72.20" y2="490" stroke="#ebebeb" stroke-width="1.0"/>
<line x1="92.60" y1="238" x2="92.60" y2="490" stroke="#ebebeb" stroke-width="1.0"/>
<line x1="113.00" y1="238" x2="113.00" y2="490" stroke="#ebebeb" stroke-width="1.0"/>
<line x1="133.40" y1="238" x2="133.40" y2="490" stroke="#ebebeb" stroke-width="1.0"/>
<line x1="153.80" y1="238" x2="153.80" y2="490" stroke="#ebebeb" stroke-width="1.0"/>
<line x1="174.20" y1="238" x2="174.20" y2="490" stroke="#ebebeb" stroke-width="1.0"/>
<line x1="215.00" y1="238" x2="215.00" y2="490" stroke="#ebebeb" stroke-width="1.0"/>
<line x1="235.40" y1="238" x2="235.40" y2="490" stroke="#ebebeb" stroke-width="1.0"/>
<line x1="0" y1="249.50" x2="239" y2="249.50" stroke="#ebebeb" stroke-width="1.0"/>
<line x1="0" y1="269.90" x2="239" y2="269.90" stroke="#ebebeb" stroke-width="1.0"/>
<line x1="0" y1="290.30" x2="239" y2="290.30" stroke="#ebebeb" stroke-width="1.0"/>
<line x1="0" y1="310.70" x2="239" y2="310.70" stroke="#ebebeb" stroke-width="1.0"/>
<line x1="0" y1="331.10" x2="239" y2="331.10" stroke="#ebebeb" stroke-width="1.0"/>
<line x1="0" y1="351.50" x2="239" y2="351.50" stroke="#ebebeb" stroke-width="1.0"/>
<line x1="0" y1="392.30" x2="239" y2="392.30" stroke="#ebebeb" stroke-width="1.0"/>
<line x1="0" y1="412.70" x2="239" y2="412.70" stroke="#ebebeb" stroke-width="1.0"/>
<line x1="0" y1="433.10" x2="239" y2="433.10" stroke="#ebebeb" stroke-width="1.0"/>
<line x1="0" y1="453.50" x2="239" y2="453.50" stroke="#ebebeb" stroke-width="1.0"/>
<line x1="0" y1="473.90" x2="239" y2="473.90" stroke="#ebebeb" stroke-width="1.0"/>
<line x1="194.6" y1="238" x2="194.6" y2="490" stroke="#a0a0a0" stroke-width="1"/>
<line x1="0" y1="371.9" x2="239" y2="371.9" stroke="#a0a0a0" stroke-width="1"/>
<path d="M108 284 H139.5 V302 H108Z" fill="#c9cbf7"/>
<path d="M108 331 H139.5 V361 H108Z" fill="#c9cbf7"/>
<path d="M93.5 361 H140 V461 H93.5Z" fill="#c9cbf7"/>
<path d="M108 361 H125 V446 H108Z" fill="#b4b7f2"/>
<path d="M104.5 446 H140 V470 H104.5Z" fill="#b9bcf3"/>
<path d="M108 284.5 H139 V342" fill="none" stroke="#2a2ad0" stroke-width="1.8"/>
<path d="M108.5 284 V361" fill="none" stroke="#2a2ad0" stroke-width="1.2"/>
<path d="M108 342 H139 M137 343 L131.5 359.5" fill="none" stroke="#2a2ad0" stroke-width="1.7"/>
<path d="M93.5 361 H140 V461 M93.5 361 V461 H104.5 M104.5 446 V470 H140 V446 M140 461 V470" fill="none" stroke="#2a2ad0" stroke-width="1.4"/>
<path d="M108 302 H139.5 M108 331.3 H139.5 M108 286 L139 302 M110.8 341.6 L136 332.2 M110 344.4 L131.5 359.2 M108 361 L125 446 M125 361 L108 446 M125 361 L140 420 M125 446 L140 446" fill="none" stroke="#2a2ad0" stroke-width="0.75"/>
<path d="M108 361 V446 M125 361 V446 M133.5 361 V446" fill="none" stroke="#2a2ad0" stroke-width="1"/>
<line x1="108" y1="417.0" x2="140" y2="417.1" stroke="#2a2ad0" stroke-width="0.75"/>
<line x1="108" y1="420.0" x2="140" y2="420.8" stroke="#2a2ad0" stroke-width="0.75"/>
<line x1="108" y1="423.0" x2="140" y2="422.7" stroke="#2a2ad0" stroke-width="0.75"/>
<line x1="108" y1="426.0" x2="140" y2="425.5" stroke="#2a2ad0" stroke-width="0.75"/>
<line x1="108" y1="429.0" x2="140" y2="430.4" stroke="#2a2ad0" stroke-width="0.75"/>
<line x1="108" y1="432.0" x2="140" y2="432.5" stroke="#2a2ad0" stroke-width="0.75"/>
<line x1="108" y1="435.0" x2="140" y2="435.0" stroke="#2a2ad0" stroke-width="0.75"/>
<line x1="108" y1="438.0" x2="140" y2="438.1" stroke="#2a2ad0" stroke-width="0.75"/>
<line x1="108" y1="441.0" x2="140" y2="441.7" stroke="#2a2ad0" stroke-width="0.75"/>
<line x1="108" y1="444.0" x2="140" y2="444.6" stroke="#2a2ad0" stroke-width="0.75"/>
<path d="M104.5 450 L140 468 M110 446 L135 470" stroke="#2a2ad0" stroke-width="0.6"/>
<path d="M160 275 H181 V276.3 H212 V275 H228.5 V286.8 H160Z" fill="#030b38"/>
<path d="M160 286 H166.4 V296.5 H160Z M222.6 286 H228.5 V296.5 H222.6Z" fill="#030b38"/>
<path d="M161.5 284 h3 M161.5 288 h3 M161.5 292 h3 M224 284 h3 M224 288 h3 M224 292 h3 M170 283.5 h14 M187 283.5 h10 M201 283.5 h18" stroke="#b0b4d0" stroke-width="0.8" stroke-dasharray="1.5 1"/>
<clipPath id="hc"><rect x="168" y="286.8" width="53.6" height="51"/></clipPath>
<rect x="168" y="286.8" width="53.6" height="51" fill="#f6f6fa"/>
<g clip-path="url(#hc)"><line x1="168.4" y1="286.5" x2="168.4" y2="338" stroke="#030b38" stroke-width="0.7"/><line x1="173.7" y1="286.5" x2="173.7" y2="338" stroke="#030b38" stroke-width="0.7"/><line x1="179.0" y1="286.5" x2="179.0" y2="338" stroke="#030b38" stroke-width="0.7"/><line x1="184.4" y1="286.5" x2="184.4" y2="338" stroke="#030b38" stroke-width="0.7"/><line x1="189.7" y1="286.5" x2="189.7" y2="338" stroke="#030b38" stroke-width="0.7"/><line x1="195.0" y1="286.5" x2="195.0" y2="338" stroke="#030b38" stroke-width="0.7"/><line x1="200.3" y1="286.5" x2="200.3" y2="338" stroke="#030b38" stroke-width="0.7"/><line x1="205.6" y1="286.5" x2="205.6" y2="338" stroke="#030b38" stroke-width="0.7"/><line x1="211.0" y1="286.5" x2="211.0" y2="338" stroke="#030b38" stroke-width="0.7"/><line x1="216.3" y1="286.5" x2="216.3" y2="338" stroke="#030b38" stroke-width="0.7"/><line x1="221.6" y1="286.5" x2="221.6" y2="338" stroke="#030b38" stroke-width="0.7"/><line x1="168" y1="287.2" x2="222" y2="287.2" stroke="#030b38" stroke-width="0.7"/><line x1="168" y1="292.3" x2="222" y2="292.3" stroke="#030b38" stroke-width="0.7"/><line x1="168" y1="297.4" x2="222" y2="297.4" stroke="#030b38" stroke-width="0.7"/><line x1="168" y1="302.4" x2="222" y2="302.4" stroke="#030b38" stroke-width="0.7"/><line x1="168" y1="307.5" x2="222" y2="307.5" stroke="#030b38" stroke-width="0.7"/><line x1="168" y1="312.6" x2="222" y2="312.6" stroke="#030b38" stroke-width="0.7"/><line x1="168" y1="317.7" x2="222" y2="317.7" stroke="#030b38" stroke-width="0.7"/><line x1="168" y1="322.8" x2="222" y2="322.8" stroke="#030b38" stroke-width="0.7"/><line x1="168" y1="327.8" x2="222" y2="327.8" stroke="#030b38" stroke-width="0.7"/><line x1="168" y1="332.9" x2="222" y2="332.9" stroke="#030b38" stroke-width="0.7"/><line x1="168" y1="338.0" x2="222" y2="338.0" stroke="#030b38" stroke-width="0.7"/><line x1="168.4" y1="292.3" x2="173.7" y2="287.2" stroke="#20244e" stroke-width="0.65"/><line x1="168.4" y1="297.4" x2="173.7" y2="292.3" stroke="#20244e" stroke-width="0.65"/><line x1="168.4" y1="302.4" x2="173.7" y2="297.4" stroke="#20244e" stroke-width="0.65"/><line x1="168.4" y1="307.5" x2="173.7" y2="302.4" stroke="#20244e" stroke-width="0.65"/><line x1="168.4" y1="312.6" x2="173.7" y2="307.5" stroke="#20244e" stroke-width="0.65"/><line x1="168.4" y1="317.7" x2="173.7" y2="312.6" stroke="#20244e" stroke-width="0.65"/><line x1="168.4" y1="322.8" x2="173.7" y2="317.7" stroke="#20244e" stroke-width="0.65"/><line x1="168.4" y1="327.8" x2="173.7" y2="322.8" stroke="#20244e" stroke-width="0.65"/><line x1="168.4" y1="332.9" x2="173.7" y2="327.8" stroke="#20244e" stroke-width="0.65"/><line x1="168.4" y1="338.0" x2="173.7" y2="332.9" stroke="#20244e" stroke-width="0.65"/><line x1="173.7" y1="292.3" x2="179.0" y2="287.2" stroke="#20244e" stroke-width="0.65"/><line x1="173.7" y1="297.4" x2="179.0" y2="292.3" stroke="#20244e" stroke-width="0.65"/><line x1="173.7" y1="302.4" x2="179.0" y2="297.4" stroke="#20244e" stroke-width="0.65"/><line x1="173.7" y1="307.5" x2="179.0" y2="302.4" stroke="#20244e" stroke-width="0.65"/><line x1="173.7" y1="312.6" x2="179.0" y2="307.5" stroke="#20244e" stroke-width="0.65"/><line x1="173.7" y1="317.7" x2="179.0" y2="312.6" stroke="#20244e" stroke-width="0.65"/><line x1="173.7" y1="322.8" x2="179.0" y2="317.7" stroke="#20244e" stroke-width="0.65"/><line x1="173.7" y1="327.8" x2="179.0" y2="322.8" stroke="#20244e" stroke-width="0.65"/><line x1="173.7" y1="332.9" x2="179.0" y2="327.8" stroke="#20244e" stroke-width="0.65"/><line x1="173.7" y1="338.0" x2="179.0" y2="332.9" stroke="#20244e" stroke-width="0.65"/><line x1="179.0" y1="292.3" x2="184.4" y2="287.2" stroke="#20244e" stroke-width="0.65"/><line x1="179.0" y1="297.4" x2="184.4" y2="292.3" stroke="#20244e" stroke-width="0.65"/><line x1="179.0" y1="302.4" x2="184.4" y2="297.4" stroke="#20244e" stroke-width="0.65"/><line x1="179.0" y1="307.5" x2="184.4" y2="302.4" stroke="#20244e" stroke-width="0.65"/><line x1="179.0" y1="312.6" x2="184.4" y2="307.5" stroke="#20244e" stroke-width="0.65"/><line x1="179.0" y1="317.7" x2="184.4" y2="312.6" stroke="#20244e" stroke-width="0.65"/><line x1="179.0" y1="322.8" x2="184.4" y2="317.7" stroke="#20244e" stroke-width="0.65"/><line x1="179.0" y1="327.8" x2="184.4" y2="322.8" stroke="#20244e" stroke-width="0.65"/><line x1="179.0" y1="332.9" x2="184.4" y2="327.8" stroke="#20244e" stroke-width="0.65"/><line x1="179.0" y1="338.0" x2="184.4" y2="332.9" stroke="#20244e" stroke-width="0.65"/><line x1="184.4" y1="292.3" x2="189.7" y2="287.2" stroke="#20244e" stroke-width="0.65"/><line x1="184.4" y1="297.4" x2="189.7" y2="292.3" stroke="#20244e" stroke-width="0.65"/><line x1="184.4" y1="302.4" x2="189.7" y2="297.4" stroke="#20244e" stroke-width="0.65"/><line x1="184.4" y1="307.5" x2="189.7" y2="302.4" stroke="#20244e" stroke-width="0.65"/><line x1="184.4" y1="312.6" x2="189.7" y2="307.5" stroke="#20244e" stroke-width="0.65"/><line x1="184.4" y1="317.7" x2="189.7" y2="312.6" stroke="#20244e" stroke-width="0.65"/><line x1="184.4" y1="322.8" x2="189.7" y2="317.7" stroke="#20244e" stroke-width="0.65"/><line x1="184.4" y1="327.8" x2="189.7" y2="322.8" stroke="#20244e" stroke-width="0.65"/><line x1="184.4" y1="332.9" x2="189.7" y2="327.8" stroke="#20244e" stroke-width="0.65"/><line x1="184.4" y1="338.0" x2="189.7" y2="332.9" stroke="#20244e" stroke-width="0.65"/><line x1="189.7" y1="292.3" x2="195.0" y2="287.2" stroke="#20244e" stroke-width="0.65"/><line x1="189.7" y1="297.4" x2="195.0" y2="292.3" stroke="#20244e" stroke-width="0.65"/><line x1="189.7" y1="302.4" x2="195.0" y2="297.4" stroke="#20244e" stroke-width="0.65"/><line x1="189.7" y1="307.5" x2="195.0" y2="302.4" stroke="#20244e" stroke-width="0.65"/><line x1="189.7" y1="312.6" x2="195.0" y2="307.5" stroke="#20244e" stroke-width="0.65"/><line x1="189.7" y1="317.7" x2="195.0" y2="312.6" stroke="#20244e" stroke-width="0.65"/><line x1="189.7" y1="322.8" x2="195.0" y2="317.7" stroke="#20244e" stroke-width="0.65"/><line x1="189.7" y1="327.8" x2="195.0" y2="322.8" stroke="#20244e" stroke-width="0.65"/><line x1="189.7" y1="332.9" x2="195.0" y2="327.8" stroke="#20244e" stroke-width="0.65"/><line x1="189.7" y1="338.0" x2="195.0" y2="332.9" stroke="#20244e" stroke-width="0.65"/><line x1="195.0" y1="292.3" x2="200.3" y2="287.2" stroke="#20244e" stroke-width="0.65"/><line x1="195.0" y1="297.4" x2="200.3" y2="292.3" stroke="#20244e" stroke-width="0.65"/><line x1="195.0" y1="302.4" x2="200.3" y2="297.4" stroke="#20244e" stroke-width="0.65"/><line x1="195.0" y1="307.5" x2="200.3" y2="302.4" stroke="#20244e" stroke-width="0.65"/><line x1="195.0" y1="312.6" x2="200.3" y2="307.5" stroke="#20244e" stroke-width="0.65"/><line x1="195.0" y1="317.7" x2="200.3" y2="312.6" stroke="#20244e" stroke-width="0.65"/><line x1="195.0" y1="322.8" x2="200.3" y2="317.7" stroke="#20244e" stroke-width="0.65"/><line x1="195.0" y1="327.8" x2="200.3" y2="322.8" stroke="#20244e" stroke-width="0.65"/><line x1="195.0" y1="332.9" x2="200.3" y2="327.8" stroke="#20244e" stroke-width="0.65"/><line x1="195.0" y1="338.0" x2="200.3" y2="332.9" stroke="#20244e" stroke-width="0.65"/><line x1="200.3" y1="292.3" x2="205.6" y2="287.2" stroke="#20244e" stroke-width="0.65"/><line x1="200.3" y1="297.4" x2="205.6" y2="292.3" stroke="#20244e" stroke-width="0.65"/><line x1="200.3" y1="302.4" x2="205.6" y2="297.4" stroke="#20244e" stroke-width="0.65"/><line x1="200.3" y1="307.5" x2="205.6" y2="302.4" stroke="#20244e" stroke-width="0.65"/><line x1="200.3" y1="312.6" x2="205.6" y2="307.5" stroke="#20244e" stroke-width="0.65"/><line x1="200.3" y1="317.7" x2="205.6" y2="312.6" stroke="#20244e" stroke-width="0.65"/><line x1="200.3" y1="322.8" x2="205.6" y2="317.7" stroke="#20244e" stroke-width="0.65"/><line x1="200.3" y1="327.8" x2="205.6" y2="322.8" stroke="#20244e" stroke-width="0.65"/><line x1="200.3" y1="332.9" x2="205.6" y2="327.8" stroke="#20244e" stroke-width="0.65"/><line x1="200.3" y1="338.0" x2="205.6" y2="332.9" stroke="#20244e" stroke-width="0.65"/><line x1="205.6" y1="292.3" x2="211.0" y2="287.2" stroke="#20244e" stroke-width="0.65"/><line x1="205.6" y1="297.4" x2="211.0" y2="292.3" stroke="#20244e" stroke-width="0.65"/><line x1="205.6" y1="302.4" x2="211.0" y2="297.4" stroke="#20244e" stroke-width="0.65"/><line x1="205.6" y1="307.5" x2="211.0" y2="302.4" stroke="#20244e" stroke-width="0.65"/><line x1="205.6" y1="312.6" x2="211.0" y2="307.5" stroke="#20244e" stroke-width="0.65"/><line x1="205.6" y1="317.7" x2="211.0" y2="312.6" stroke="#20244e" stroke-width="0.65"/><line x1="205.6" y1="322.8" x2="211.0" y2="317.7" stroke="#20244e" stroke-width="0.65"/><line x1="205.6" y1="327.8" x2="211.0" y2="322.8" stroke="#20244e" stroke-width="0.65"/><line x1="205.6" y1="332.9" x2="211.0" y2="327.8" stroke="#20244e" stroke-width="0.65"/><line x1="205.6" y1="338.0" x2="211.0" y2="332.9" stroke="#20244e" stroke-width="0.65"/><line x1="211.0" y1="292.3" x2="216.3" y2="287.2" stroke="#20244e" stroke-width="0.65"/><line x1="211.0" y1="297.4" x2="216.3" y2="292.3" stroke="#20244e" stroke-width="0.65"/><line x1="211.0" y1="302.4" x2="216.3" y2="297.4" stroke="#20244e" stroke-width="0.65"/><line x1="211.0" y1="307.5" x2="216.3" y2="302.4" stroke="#20244e" stroke-width="0.65"/><line x1="211.0" y1="312.6" x2="216.3" y2="307.5" stroke="#20244e" stroke-width="0.65"/><line x1="211.0" y1="317.7" x2="216.3" y2="312.6" stroke="#20244e" stroke-width="0.65"/><line x1="211.0" y1="322.8" x2="216.3" y2="317.7" stroke="#20244e" stroke-width="0.65"/><line x1="211.0" y1="327.8" x2="216.3" y2="322.8" stroke="#20244e" stroke-width="0.65"/><line x1="211.0" y1="332.9" x2="216.3" y2="327.8" stroke="#20244e" stroke-width="0.65"/><line x1="211.0" y1="338.0" x2="216.3" y2="332.9" stroke="#20244e" stroke-width="0.65"/><line x1="216.3" y1="292.3" x2="221.6" y2="287.2" stroke="#20244e" stroke-width="0.65"/><line x1="216.3" y1="297.4" x2="221.6" y2="292.3" stroke="#20244e" stroke-width="0.65"/><line x1="216.3" y1="302.4" x2="221.6" y2="297.4" stroke="#20244e" stroke-width="0.65"/><line x1="216.3" y1="307.5" x2="221.6" y2="302.4" stroke="#20244e" stroke-width="0.65"/><line x1="216.3" y1="312.6" x2="221.6" y2="307.5" stroke="#20244e" stroke-width="0.65"/><line x1="216.3" y1="317.7" x2="221.6" y2="312.6" stroke="#20244e" stroke-width="0.65"/><line x1="216.3" y1="322.8" x2="221.6" y2="317.7" stroke="#20244e" stroke-width="0.65"/><line x1="216.3" y1="327.8" x2="221.6" y2="322.8" stroke="#20244e" stroke-width="0.65"/><line x1="216.3" y1="332.9" x2="221.6" y2="327.8" stroke="#20244e" stroke-width="0.65"/><line x1="216.3" y1="338.0" x2="221.6" y2="332.9" stroke="#20244e" stroke-width="0.65"/></g>
<rect x="186" y="285" width="16.5" height="18" fill="#3a3e58"/>
<path d="M188 289 L200 299 M190 295 L198 288" stroke="#5a5e78" stroke-width="0.7"/>
<rect x="165" y="337.8" width="59" height="1.6" fill="#030b38"/>
<path d="M164.3 340 H175 L174.5 383 H165Z M165.5 420 H174 L174 452 H165.5Z" fill="#030b38"/>
<path d="M166.2 383 V420 M173.3 383 V420 M166.2 420 L174 383" stroke="#030b38" stroke-width="1.3" fill="none"/>
<path d="M213.5 340 H224.3 L223.8 452 H214.5Z" fill="#030b38"/>
<path d="M168.5 440.8 l0.7 4.7" stroke="#c8ccdf" stroke-width="0.8"/>
<path d="M170.8 434.2 l0.8 5.6" stroke="#c8ccdf" stroke-width="0.8"/>
<path d="M169.8 445.4 l0.3 4.8" stroke="#c8ccdf" stroke-width="0.8"/>
<path d="M168.5 428.6 l0.1 2.6" stroke="#c8ccdf" stroke-width="0.8"/>
<path d="M171.9 422.1 l0.1 2.7" stroke="#c8ccdf" stroke-width="0.8"/>
<path d="M168.5 364.1 l-0.1 5.9" stroke="#c8ccdf" stroke-width="0.8"/>
<path d="M167.9 348.4 l-0.3 4.6" stroke="#c8ccdf" stroke-width="0.8"/>
<path d="M167.1 425.8 l-0.4 3.8" stroke="#c8ccdf" stroke-width="0.8"/>
<path d="M166.2 440.2 l-0.3 2.7" stroke="#c8ccdf" stroke-width="0.8"/>
<path d="M167.4 365.5 l0.6 4.4" stroke="#c8ccdf" stroke-width="0.8"/>
<path d="M167.1 366.2 l-0.1 2.7" stroke="#c8ccdf" stroke-width="0.8"/>
<path d="M167.9 423.8 l0.3 5.3" stroke="#c8ccdf" stroke-width="0.8"/>
<path d="M171.3 370.1 l0.9 3.4" stroke="#c8ccdf" stroke-width="0.8"/>
<path d="M168.9 445.4 l-0.2 2.2" stroke="#c8ccdf" stroke-width="0.8"/>
<path d="M170.8 444.3 l0.1 4.1" stroke="#c8ccdf" stroke-width="0.8"/>
<path d="M171.9 371.7 l0.5 3.0" stroke="#c8ccdf" stroke-width="0.8"/>
<path d="M168.8 343.2 l0.1 5.2" stroke="#c8ccdf" stroke-width="0.8"/>
<path d="M166.9 359.0 l-0.0 3.0" stroke="#c8ccdf" stroke-width="0.8"/>
<path d="M169.1 435.9 l0.5 6.0" stroke="#c8ccdf" stroke-width="0.8"/>
<path d="M169.2 370.8 l-0.3 5.1" stroke="#c8ccdf" stroke-width="0.8"/>
<path d="M170.9 342.1 l0.8 5.3" stroke="#c8ccdf" stroke-width="0.8"/>
<path d="M167.6 350.9 l0.6 2.4" stroke="#c8ccdf" stroke-width="0.8"/>
<path d="M219.1 445.2 l0.8 3.2" stroke="#c8ccdf" stroke-width="0.8"/>
<path d="M217.9 427.2 l0.9 2.4" stroke="#c8ccdf" stroke-width="0.8"/>
<path d="M216.5 431.2 l0.3 4.1" stroke="#c8ccdf" stroke-width="0.8"/>
<path d="M220.8 359.0 l-0.0 3.2" stroke="#c8ccdf" stroke-width="0.8"/>
<path d="M217.1 350.2 l0.2 4.9" stroke="#c8ccdf" stroke-width="0.8"/>
<path d="M219.8 380.8 l-0.3 3.6" stroke="#c8ccdf" stroke-width="0.8"/>
<path d="M221.8 391.9 l0.7 4.6" stroke="#c8ccdf" stroke-width="0.8"/>
<path d="M217.6 343.3 l0.6 2.9" stroke="#c8ccdf" stroke-width="0.8"/>
<path d="M218.2 402.9 l-0.5 6.0" stroke="#c8ccdf" stroke-width="0.8"/>
<path d="M216.4 428.3 l0.4 3.2" stroke="#c8ccdf" stroke-width="0.8"/>
<path d="M218.8 382.6 l-0.1 3.3" stroke="#c8ccdf" stroke-width="0.8"/>
<path d="M219.7 384.4 l-0.1 2.8" stroke="#c8ccdf" stroke-width="0.8"/>
<path d="M217.3 421.0 l0.9 4.3" stroke="#c8ccdf" stroke-width="0.8"/>
<path d="M217.3 420.2 l0.7 2.4" stroke="#c8ccdf" stroke-width="0.8"/>
<path d="M215.7 357.2 l0.5 4.8" stroke="#c8ccdf" stroke-width="0.8"/>
<path d="M217.8 361.4 l0.8 4.4" stroke="#c8ccdf" stroke-width="0.8"/>
<path d="M216.6 351.7 l-0.3 2.5" stroke="#c8ccdf" stroke-width="0.8"/>
<path d="M215.5 385.9 l0.9 3.7" stroke="#c8ccdf" stroke-width="0.8"/>
<path d="M219.5 397.2 l0.7 5.3" stroke="#c8ccdf" stroke-width="0.8"/>
<path d="M217.3 383.7 l0.1 2.1" stroke="#c8ccdf" stroke-width="0.8"/>
<path d="M219.9 385.3 l1.0 5.2" stroke="#c8ccdf" stroke-width="0.8"/>
<path d="M219.3 413.3 l-0.5 3.3" stroke="#c8ccdf" stroke-width="0.8"/>
<path d="M219.6 379.0 l-0.3 3.5" stroke="#c8ccdf" stroke-width="0.8"/>
<path d="M220.5 397.0 l0.7 4.4" stroke="#c8ccdf" stroke-width="0.8"/>
<path d="M220.4 359.1 l0.9 4.2" stroke="#c8ccdf" stroke-width="0.8"/>
<path d="M218.5 380.1 l-0.3 4.9" stroke="#c8ccdf" stroke-width="0.8"/>
<path d="M218.6 448.6 l0.6 5.3" stroke="#c8ccdf" stroke-width="0.8"/>
<path d="M221.6 363.3 l0.4 2.8" stroke="#c8ccdf" stroke-width="0.8"/>
<path d="M216.7 351.0 l0.4 4.8" stroke="#c8ccdf" stroke-width="0.8"/>
<path d="M221.5 377.6 l0.0 3.9" stroke="#c8ccdf" stroke-width="0.8"/>
<path d="M221.8 355.4 l-0.3 5.6" stroke="#c8ccdf" stroke-width="0.8"/>
<path d="M218.9 400.7 l0.3 3.1" stroke="#c8ccdf" stroke-width="0.8"/>
<path d="M221.9 440.2 l0.7 4.4" stroke="#c8ccdf" stroke-width="0.8"/>
<path d="M220.8 355.2 l-0.1 5.6" stroke="#c8ccdf" stroke-width="0.8"/>
<path d="M175.5 341 L181 358.8 L187 341 L193 358.8 L199 341 L205 358.8 L212.8 341" stroke="#030b38" stroke-width="0.8" fill="none"/>
<path d="M175.5 358.8 H212.8" stroke="#030b38" stroke-width="1.2"/>
<path d="M180.6 358.8 V452 M192.6 358.8 V452 M198.2 358.8 V452 M210 358.8 V452" stroke="#444a70" stroke-width="0.6"/>
<path d="M192.6 360 L210 398 L180.6 440 M198.2 360 L176 420 M210 398 L214 452 M176 400 H212 M176 360 L188 452" stroke="#030b38" stroke-width="0.6" fill="none"/>
<line x1="175" y1="418.0" x2="213" y2="417.4" stroke="#030b38" stroke-width="0.7"/>
<line x1="175" y1="421.3" x2="213" y2="421.5" stroke="#030b38" stroke-width="0.7"/>
<line x1="175" y1="424.6" x2="213" y2="425.4" stroke="#030b38" stroke-width="0.7"/>
<line x1="175" y1="427.9" x2="213" y2="427.1" stroke="#030b38" stroke-width="0.7"/>
<line x1="175" y1="431.2" x2="213" y2="431.3" stroke="#030b38" stroke-width="0.7"/>
<line x1="175" y1="434.5" x2="213" y2="433.5" stroke="#030b38" stroke-width="0.7"/>
<line x1="175" y1="437.8" x2="213" y2="436.7" stroke="#030b38" stroke-width="0.7"/>
<line x1="175" y1="441.1" x2="213" y2="440.3" stroke="#030b38" stroke-width="0.7"/>
<path d="M228.5 284 H236 M224 401 H237 M224 439 H237" stroke="#8a8a8a" stroke-width="0.7"/>
<path d="M161 452.3 H227.8 V474 L222 475 L200 473.5 H188 L167 475 L161 474Z" fill="#030b38"/>
<path d="M169 459 L175 457.5 H219 L222 460 M171 463 H195 M200 463.5 H215 M190 471 H200" stroke="#9aa0c0" stroke-width="0.7" fill="none"/>
<path d="M166.9 475 V489 M222 475 V489" stroke="#8a8a90" stroke-width="0.9"/>
<line x1="227.8" y1="467" x2="238" y2="467" stroke="#555" stroke-width="0.8"/></svg></div>
<div class="a" style="left:239px;top:238.2px;width:276px;height:250.8px;background:#000;border-top:1px solid #3c3c3c;border-left:1px solid #3c3c3c;overflow:hidden"><svg class="a" style="left:-240px;top:-239.2px" width="694" height="500" viewBox="0 0 694 500"><polygon points="296.5,357.8 329.6,324.7 333,324.3 362,333.8 370,333 456,366.4 462.4,368 466.4,374.4 467.2,377.6 469.8,390.6 465.9,405 460,414 452.2,429.6 447.7,434.5 436,426 429.5,422.8 426.5,413.1 427.9,404.5 407.7,394.4 406.3,390 397.6,401.6 396.2,404.5 339.4,379.8 339.4,366 341.9,360.4 309.5,353.9 310.8,358.4 311.4,360.4 310,364.3 305.6,363.6 297.1,361.7" fill="#d0d8fe" />
<polygon points="268,384.6 286.7,365.8 325.9,382.1 328.5,383 340,387.2 410,420.2 430.8,429.3 437.3,437.1 438.6,441 436,454 429.5,469.6 423.2,478.6 397.3,470 396.2,461.3 373.5,448.4 371.3,450.5 315,417.7 303.2,410.5 283,396 269.4,388.9" fill="#fdfdfd" />
<polygon points="269.3,385.3 287.6,369.2 322,383.6 307.5,399.5 304,401 283,393.5 271,388" fill="#000" />
<polygon points="323.3,383.8 332,385.6 313.8,404.6 311.2,397.7" fill="#000" />
<polygon points="430.8,435.2 434.7,438.4 435.4,446.2 424.3,472.2 413.3,467.7" fill="#000" />
<polygon points="353.5,350 360,342 367.8,337 369,340 362,350 356,353" fill="#3a3b46" />
<polygon points="344.9,364.4 359.2,357.8 376.8,364.9 371.3,375.4" fill="#3a3b46" />
<polygon points="375.7,369.3 379,368.8 405,378 405,393.5 375.7,380.3" fill="#3a3b46" />
<polygon points="407.7,388.6 412,385 420.7,385.8 429.3,391.5 430.8,398.7 427.9,404.5 407.7,394.4" fill="#3a3b46" />
<polygon points="432.7,386.7 440,388 445.7,392 444,395.5 436,392.5" fill="#202028" />
<path d="M432.7 414 L441.8 418" stroke="#202028" stroke-width="1.2"/>
<path d="M364.7 355 L384 363 M387 364.5 L405 371.5 M408 373 L440 387.2" stroke="#2a2a34" stroke-width="1"/>
<path d="M359.2 357.8 L371.3 375.4 M375.7 380.3 L405 378 M409 394.4 L429.3 401.6" stroke="#c0c4e4" stroke-width="0.6"/>
<path d="M447.5 405.0 L455.0 376.0" stroke="#30323c" stroke-width="0.8"/>
<path d="M449.4 404.4 L456.6 376.3" stroke="#30323c" stroke-width="0.8"/>
<path d="M451.3 403.8 L458.2 376.6" stroke="#30323c" stroke-width="0.8"/>
<path d="M453.2 403.2 L459.8 376.9" stroke="#30323c" stroke-width="0.8"/>
<path d="M455.1 402.6 L461.4 377.2" stroke="#30323c" stroke-width="0.8"/>
<path d="M364.3 328.8 L367.6 335" stroke="#d0d8fe" stroke-width="1.8"/>
<path d="M355.5 346 L366 339 M357 348.5 L367.5 341.5" stroke="#c0c4e0" stroke-width="0.6"/>
<path d="M341.6 361.6 L346 359.4" stroke="#505468" stroke-width="1"/></svg></div>
<div class="a" style="left:515px;top:38px;width:4px;height:451px;background:linear-gradient(90deg,#fbfaf5,#f2f0e6)"></div>
<div class="a" style="left:1.7px;top:39.6px;width:7.5px;height:7px;background:#ebebf0;border-bottom:0.8px solid #9a9aa0"></div>
<svg class="a" style="left:3.7px;top:41.4px" width="6" height="5"><path d="M0.8 0.8h2.6v2.2H0.8z" fill="none" stroke="#333" stroke-width="0.9"/><path d="M3.2 2.8l1.6 1.4" stroke="#333" stroke-width="0.9"/></svg>
<div class="t" style="left:9.6px;top:39.7px;font-size:6.1px;color:#111;-webkit-text-stroke:0.08px #111">Front</div>
<div class="a" style="left:241.5px;top:39.8px;width:7.5px;height:7px;background:#ebebf0;border-bottom:0.8px solid #9a9aa0"></div>
<svg class="a" style="left:243.5px;top:41.599999999999994px" width="6" height="5"><path d="M0.8 0.8h2.6v2.2H0.8z" fill="none" stroke="#333" stroke-width="0.9"/><path d="M3.2 2.8l1.6 1.4" stroke="#333" stroke-width="0.9"/></svg>
<div class="t" style="left:249.6px;top:39.9px;font-size:6.1px;color:#111;-webkit-text-stroke:0.08px #111">Left</div>
<div class="a" style="left:2px;top:240px;width:7.5px;height:7px;background:#ebebf0;border-bottom:0.8px solid #9a9aa0"></div>
<svg class="a" style="left:4px;top:241.8px" width="6" height="5"><path d="M0.8 0.8h2.6v2.2H0.8z" fill="none" stroke="#333" stroke-width="0.9"/><path d="M3.2 2.8l1.6 1.4" stroke="#333" stroke-width="0.9"/></svg>
<div class="t" style="left:10.4px;top:240.1px;font-size:6.1px;color:#111;-webkit-text-stroke:0.08px #111">Top</div>
<div class="a" style="left:240.5px;top:240px;width:7.5px;height:7px;background:#ebebf0;border-bottom:0.8px solid #9a9aa0"></div>
<svg class="a" style="left:242.5px;top:241.8px" width="6" height="5"><path d="M0.8 0.8h2.6v2.2H0.8z" fill="none" stroke="#333" stroke-width="0.9"/><path d="M3.2 2.8l1.6 1.4" stroke="#333" stroke-width="0.9"/></svg>
<!-- second toolbar on panel -->
<div class="a" style="left:519px;top:38.2px;width:173px;height:1px;background:#d8d4c0"></div>
<div class="a" style="left:574.5px;top:38.7px;width:58px;height:11.6px;background:linear-gradient(#f4f3ec,#e6e3d4);border-left:1px solid #d0cdbb"></div>
<div class="a" style="left:579px;top:40.5px;width:19px;height:9px;background:#f4f3ec;border:1px solid #b8b6a8"></div>
<div class="a" style="left:579.5px;top:41px;width:7px;height:8px;border-left:1.2px solid #a8a698;border-top:1px solid #a8a698;background:#fafaf5"></div>
<div class="a" style="left:588.5px;top:41px;width:9px;height:4px;background:#eceade;border-bottom:1px solid #a09e90"></div>
<div class="a" style="left:588.5px;top:45px;width:9px;height:4px;background:#eceade;border-bottom:1px solid #a09e90"></div>
<div class="t" style="left:601.8px;top:42.2px;font-size:6.2px;color:#222;-webkit-text-stroke:0.12px #222">&lt;N/A&gt;</div>
<div class="a" style="left:633.5px;top:38.7px;width:1px;height:11.6px;background:#d6d3c2"></div><div class="a" style="left:634.5px;top:38.7px;width:1px;height:11.6px;background:#faf9f3"></div>
<div class="panel">
<div class="bt" style="left:634.5px;top:52.8px;width:8.5px;height:8px;border-color:#b0ae9e;background:#f2f1ea"></div>
<svg class="a" style="left:636.5px;top:54.6px" width="5" height="5"><path d="M2.5 0.6L4.4 2.5 2.5 4.4 0.6 2.5Z" fill="none" stroke="#555" stroke-width="0.7"/></svg>
<div class="a" style="left:645px;top:52.8px;width:42.5px;height:8px;background:#f1efe6;border:1px solid #c8c5b6"></div>
<svg class="a" style="left:659px;top:54px" width="14" height="6"><path d="M1 3.5L7 1l6 2.5M1 5.5L7 3l6 2.5" stroke="#444" stroke-width="0.8" fill="none"/></svg>
<div class="t" style="left:634.5px;top:64px">Create...</div>
<div class="a" style="left:633.5px;top:70.9px;width:54.5px;height:8.6px;border-top:1px solid #c4c0ae;border-left:1px solid #d4d0be;background:#ebe8d8"></div>
<div class="t" style="left:634.5px;top:72.5px">Modify...</div>
<div class="t" style="left:640px;top:81px">Extended...</div>
<div class="t" style="left:640px;top:89.6px">Align...</div>
<div class="a" style="left:639px;top:96.60000000000001px;width:49px;height:8.6px;border-top:1px solid #c4c0ae;border-left:1px solid #d4d0be;background:#ebe8d8"></div>
<div class="t" style="left:640px;top:98.2px">Move</div>
<div class="t" style="left:640px;top:106.8px">Rotate</div>
<div class="t" style="left:640px;top:115.4px">Scale</div>
<div class="t" style="left:640px;top:124px">Mirror</div>
<div class="t" style="left:640px;top:132.6px">Break</div>
<div class="t" style="left:640px;top:141.2px">Reorient</div>
<div class="t" style="left:640px;top:149.8px">Delete</div>
<div class="t" style="left:640px;top:158.4px">Spline...</div>
<div class="t" style="left:634.5px;top:167px">Surface...</div>
<div class="t" style="left:634.5px;top:175.6px">Select...</div>
<div class="t" style="left:634.5px;top:184.2px">Display...</div>
<div class="a" style="left:634px;top:71px;width:55px;height:0.8px;background:#c8c5b4"></div>
<div class="a" style="left:640px;top:256px;width:45px;height:12.5px;border:1px solid #f6f5ee;border-right-color:#dcd9c8;border-bottom-color:#dcd9c8"></div>
<svg class="a" style="left:657.5px;top:262.5px" width="12" height="6"><path d="M1 0.8L5.5 3 10 0.8M1 2.8L5.5 5 10 2.8" stroke="#333" stroke-width="0.9" fill="none"/></svg>
<div class="bt" style="left:634px;top:269.8px;width:17.7px;height:8.8px;line-height:7.4px;font-size:6.3px;border-color:#9a988c;border-right-color:#5a5a54;border-bottom-color:#5a5a54">EXT</div>
<div class="bt" style="left:653.5px;top:269.8px;width:17.5px;height:8.8px;line-height:7.4px;font-size:6.3px;border-color:#9a988c;border-right-color:#5a5a54;border-bottom-color:#5a5a54">SEL</div>
<div class="bt" style="left:673px;top:269.8px;width:18px;height:8.8px;line-height:7.4px;font-size:6.3px;border-color:#9a988c;border-right-color:#5a5a54;border-bottom-color:#5a5a54">MUL</div>
</div>
<div class="a" style="left:516.3px;top:279.8px;width:58px;height:1px;background:#fbfbf6"></div><div class="a" style="left:516.3px;top:280.6px;width:57.7px;height:93px;background:#fff;border:1px solid #3c3c3c"></div>
<div class="a" style="left:517.3px;top:281.5px;width:46.7px;height:91px;background:#316ac5"></div>
<div class="a" style="left:564px;top:281.5px;width:9px;height:91px;background:#f8f8f4"></div>
<div class="a" style="left:564.2px;top:281.8px;width:8.6px;height:8px;background:#e4ecfc;border:0.6px solid #c8d4f0;border-radius:1px"></div>
<svg class="a" style="left:565px;top:283px" width="7" height="5"><path d="M1 4L3.5 1.5 6 4" stroke="#4d6185" stroke-width="1.1" fill="none"/></svg>
<div class="a" style="left:564.2px;top:351px;width:8.6px;height:15px;background:#d2defa;border:0.6px solid #b8c8f0;border-radius:1px"></div>
<div class="a" style="left:564.2px;top:366.4px;width:8.6px;height:6.3px;background:#e4ecfc;border:0.6px solid #c8d4f0;border-radius:1px"></div>
<svg class="a" style="left:565px;top:367px" width="7" height="5"><path d="M1 1.5L3.5 4 6 1.5" stroke="#4d6185" stroke-width="1.1" fill="none"/></svg>
<div class="lst">
<div class="t" style="top:283.8px">Box33</div>
<div class="t" style="top:290.8px">Box34</div>
<div class="t" style="top:297.8px">Box35</div>
<div class="t" style="top:304.8px">Box36</div>
<div class="t" style="top:311.8px">Box19</div>
<div class="t" style="top:318.8px">Box37</div>
<div class="t" style="top:325.8px">Box21</div>
<div class="t" style="top:332.8px">Box010</div>
<div class="t" style="top:339.8px">Line22</div>
<div class="t" style="top:346.8px">Line08</div>
<div class="t" style="top:353.8px">FramRuta</div>
<div class="t" style="top:360.8px">Bakf&ouml;nster</div>
<div class="t" style="top:367.8px">Bakf&ouml;nster0</div>
</div>
<div class="bt" style="left:516.7px;top:375px;width:28.3px;height:8.2px;line-height:6.6px;font-size:6.1px;border-color:#8a8a80;border-right-color:#444;border-bottom-color:#444">Hide All</div>
<div class="bt" style="left:546px;top:375px;width:26.3px;height:8.2px;line-height:6.6px;font-size:6.1px;border-color:#8a8a80;border-right-color:#444;border-bottom-color:#444">Show All</div>
<div class="bt" style="left:516.7px;top:383.6px;width:28.3px;height:8.2px;line-height:6.6px;font-size:6.1px;border-color:#8a8a80;border-right-color:#444;border-bottom-color:#444">Select All</div>
<div class="bt" style="left:546px;top:383.6px;width:26.3px;height:8.2px;line-height:6.6px;font-size:6.1px;border-color:#8a8a80;border-right-color:#444;border-bottom-color:#444">Deselect</div>
<!-- Status bar -->
<div class="a" style="left:0;top:489px;width:692px;height:1px;background:#cfcbb6"></div>
<div class="a" style="left:0;top:490px;width:692px;height:1px;background:#fbfaf4"></div>
<div class="sb">
<div class="a" style="left:544.5px;top:490.5px;width:38.5px;height:9.5px;border-left:1px solid #c6c3b0;border-top:1px solid #d8d5c2"></div>
<div class="a" style="left:582px;top:490.5px;width:36px;height:9.5px;border-left:1px solid #c6c3b0;border-top:1px solid #d8d5c2"></div>
<div class="a" style="left:618.5px;top:490.5px;width:36.5px;height:9.5px;border-left:1px solid #c6c3b0;border-top:1px solid #d8d5c2"></div>
<div class="a" style="left:655.5px;top:490.5px;width:34px;height:9.5px;border-left:1px solid #c6c3b0;border-top:1px solid #d8d5c2"></div>
<div class="t" style="left:546.5px">X: -350.1135</div>
<div class="t" style="left:583.5px">Y: 0.0000</div>
<div class="t" style="left:620.5px">Z: 13.0284</div>
<div class="t" style="left:659px">units</div>
</div>
</body></html>
